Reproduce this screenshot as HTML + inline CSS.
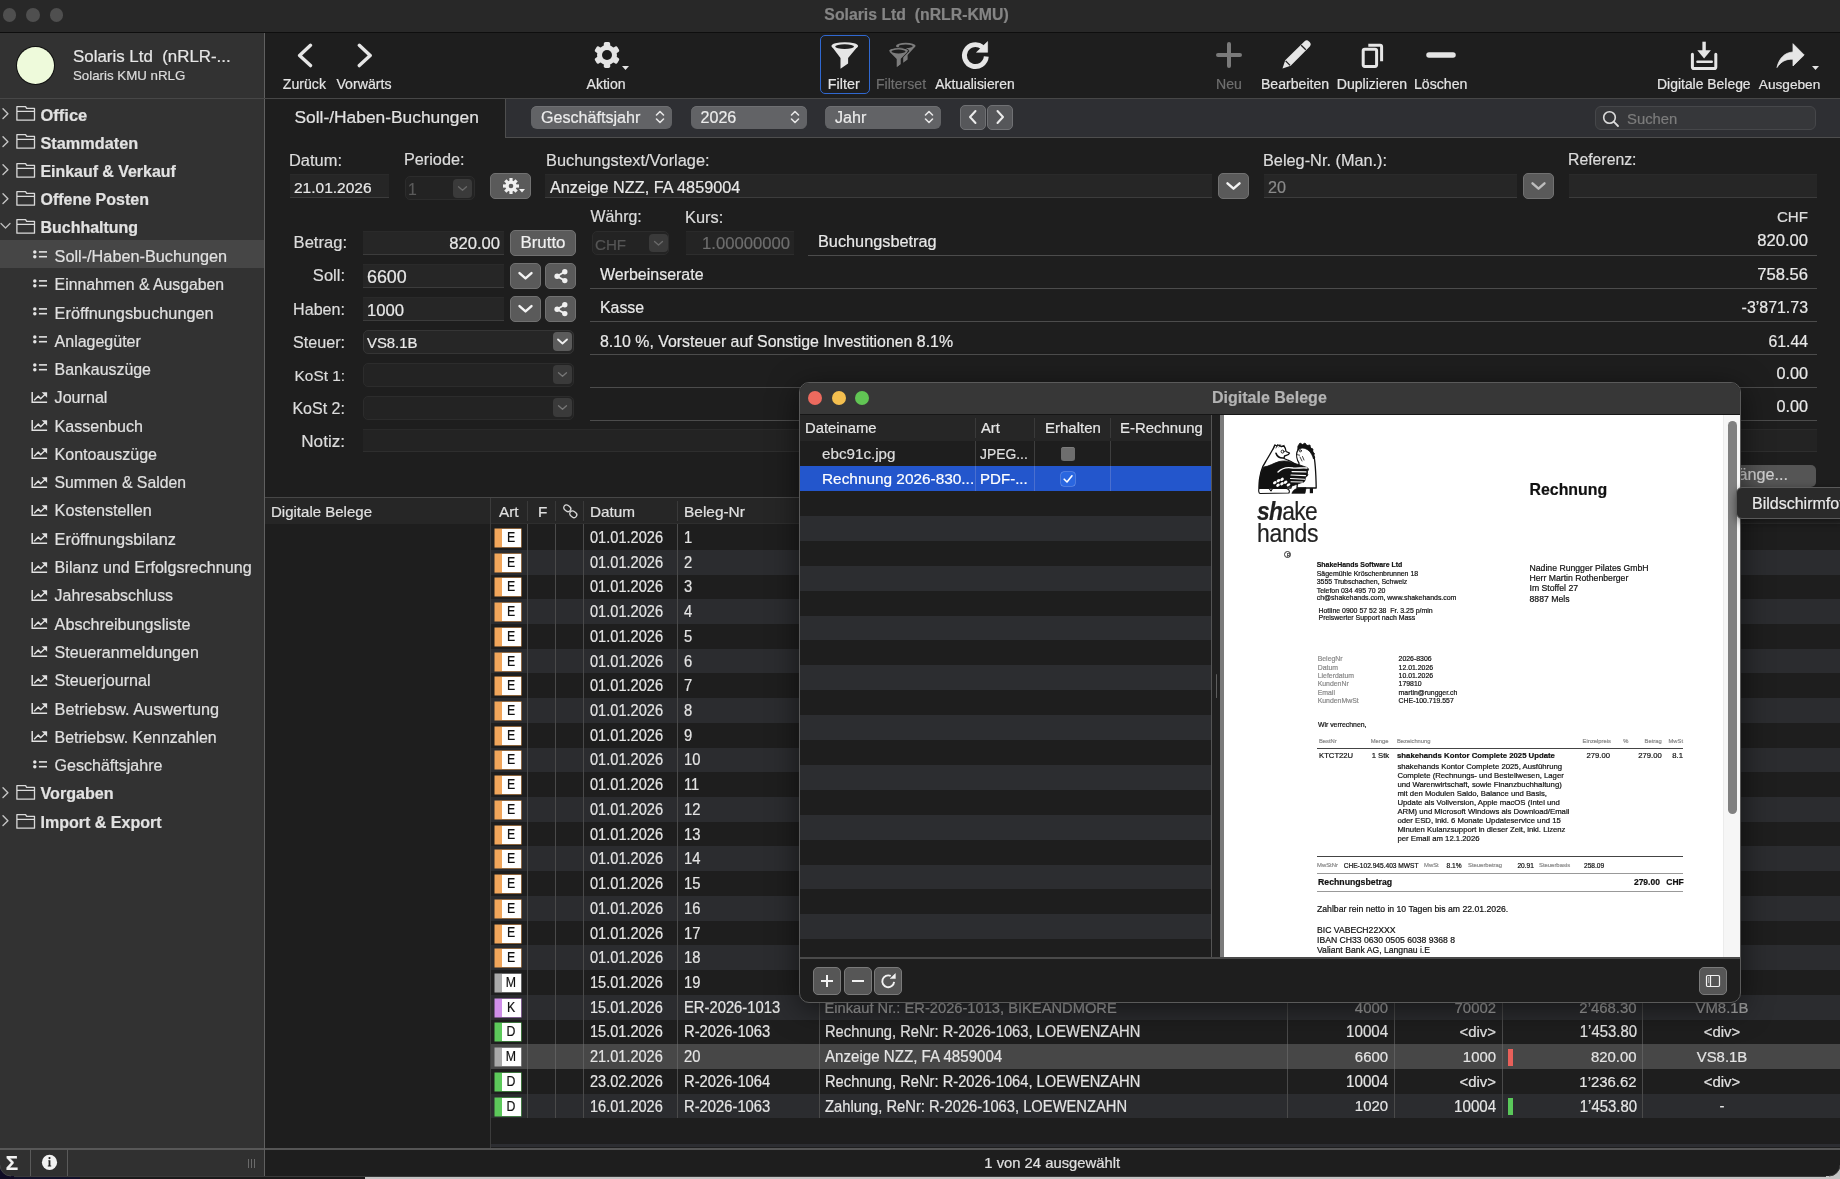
<!DOCTYPE html>
<html><head><meta charset="utf-8"><style>
html,body{margin:0;padding:0;}
body{width:1840px;height:1179px;position:relative;overflow:hidden;background:#1e1e1e;font-family:"Liberation Sans", sans-serif;}
.a{position:absolute;box-sizing:border-box;}
.t{position:absolute;white-space:nowrap;-webkit-text-stroke:0.2px currentColor;}
</style></head><body><div style="position:absolute;left:0;top:0;width:1840px;height:1179px;will-change:transform;">
<div class="a" style="left:0px;top:0px;width:1840px;height:32px;background:#282828;"></div><div class="a" style="left:0px;top:32px;width:1840px;height:1px;background:#0e0e0e;"></div><div class="a" style="left:2.5999999999999996px;top:8.3px;width:13.8px;height:13.8px;background:#4f4f4f;border-radius:50%;"></div><div class="a" style="left:26.1px;top:8.3px;width:13.8px;height:13.8px;background:#4f4f4f;border-radius:50%;"></div><div class="a" style="left:49.7px;top:8.3px;width:13.8px;height:13.8px;background:#4f4f4f;border-radius:50%;"></div><div class="t" style="top:4.73px;font-size:15.8px;line-height:19px;color:#858585;font-weight:700;left:716.5px;width:400px;text-align:center;">Solaris Ltd&nbsp; (nRLR-KMU)</div><div class="a" style="left:0px;top:33px;width:264px;height:1115px;background:#323232;"></div><div class="a" style="left:264px;top:33px;width:1px;height:1143px;background:#606060;"></div><div class="a" style="left:17px;top:47px;width:37px;height:37px;background:#eefadb;border-radius:50%;box-shadow:0 0 0 1px #111;"></div><div class="t" style="top:46.74px;font-size:16.9px;line-height:20px;color:#e6e6e6;left:73px;">Solaris Ltd&nbsp; (nRLR-...</div><div class="t" style="top:68.39px;font-size:13.3px;line-height:16px;color:#dcdcdc;left:73px;">Solaris KMU nRLG</div><div class="a" style="left:0px;top:98px;width:1840px;height:1px;background:#474747;"></div><svg class="a" style="left:1px;top:106.7px;" width="10" height="14" viewBox="0 0 10 14"><path d="M2 1.8 L6.9 6.7 L2 11.5" fill="none" stroke="#c4c4c4" stroke-width="1.4" stroke-linecap="round" stroke-linejoin="round"/></svg><svg class="a" style="left:15px;top:105.0px;" width="22" height="17" viewBox="0 0 22 17"><path d="M1.9 1.6 H10.6 L11.6 3.4 H19.5 V15.2 H1.9 Z M1.9 6.4 H19.5" fill="none" stroke="#dadada" stroke-width="1.3" stroke-linejoin="round"/></svg><div class="t" style="top:104.59px;font-size:16.49px;line-height:20px;color:#e2e2e2;font-weight:700;left:40.5px;">Office</div><svg class="a" style="left:1px;top:135.0px;" width="10" height="14" viewBox="0 0 10 14"><path d="M2 1.8 L6.9 6.7 L2 11.5" fill="none" stroke="#c4c4c4" stroke-width="1.4" stroke-linecap="round" stroke-linejoin="round"/></svg><svg class="a" style="left:15px;top:133.3px;" width="22" height="17" viewBox="0 0 22 17"><path d="M1.9 1.6 H10.6 L11.6 3.4 H19.5 V15.2 H1.9 Z M1.9 6.4 H19.5" fill="none" stroke="#dadada" stroke-width="1.3" stroke-linejoin="round"/></svg><div class="t" style="top:132.96px;font-size:16.28px;line-height:20px;color:#e2e2e2;font-weight:700;left:40.5px;">Stammdaten</div><svg class="a" style="left:1px;top:163.3px;" width="10" height="14" viewBox="0 0 10 14"><path d="M2 1.8 L6.9 6.7 L2 11.5" fill="none" stroke="#c4c4c4" stroke-width="1.4" stroke-linecap="round" stroke-linejoin="round"/></svg><svg class="a" style="left:15px;top:161.60000000000002px;" width="22" height="17" viewBox="0 0 22 17"><path d="M1.9 1.6 H10.6 L11.6 3.4 H19.5 V15.2 H1.9 Z M1.9 6.4 H19.5" fill="none" stroke="#dadada" stroke-width="1.3" stroke-linejoin="round"/></svg><div class="t" style="top:161.89px;font-size:15.91px;line-height:19px;color:#e2e2e2;font-weight:700;left:40.5px;">Einkauf &amp; Verkauf</div><svg class="a" style="left:1px;top:191.60000000000002px;" width="10" height="14" viewBox="0 0 10 14"><path d="M2 1.8 L6.9 6.7 L2 11.5" fill="none" stroke="#c4c4c4" stroke-width="1.4" stroke-linecap="round" stroke-linejoin="round"/></svg><svg class="a" style="left:15px;top:189.90000000000003px;" width="22" height="17" viewBox="0 0 22 17"><path d="M1.9 1.6 H10.6 L11.6 3.4 H19.5 V15.2 H1.9 Z M1.9 6.4 H19.5" fill="none" stroke="#dadada" stroke-width="1.3" stroke-linejoin="round"/></svg><div class="t" style="top:190.16px;font-size:16.0px;line-height:19px;color:#e2e2e2;font-weight:700;left:40.5px;">Offene Posten</div><svg class="a" style="left:0px;top:220.9px;" width="14" height="10" viewBox="0 0 14 10"><path d="M1 2.5 L5.5 7 L10 2.5" fill="none" stroke="#bdbdbd" stroke-width="1.3" stroke-linecap="round" stroke-linejoin="round"/></svg><svg class="a" style="left:15px;top:218.20000000000002px;" width="22" height="17" viewBox="0 0 22 17"><path d="M1.9 1.6 H10.6 L11.6 3.4 H19.5 V15.2 H1.9 Z M1.9 6.4 H19.5" fill="none" stroke="#dadada" stroke-width="1.3" stroke-linejoin="round"/></svg><div class="t" style="top:218.46px;font-size:15.98px;line-height:19px;color:#e2e2e2;font-weight:700;left:40.5px;">Buchhaltung</div><div class="a" style="left:0px;top:240px;width:264px;height:28px;background:#464646;"></div><svg class="a" style="left:32px;top:250.2px;" width="16" height="12" viewBox="0 0 16 12"><circle cx="2.8" cy="1.9" r="1.75" fill="#e6e6e6"/><circle cx="2.8" cy="6.7" r="1.75" fill="#e6e6e6"/><rect x="6.9" y="1.1" width="8.1" height="1.6" fill="#e0e0e0"/><rect x="6.9" y="5.9" width="8.1" height="1.6" fill="#e0e0e0"/></svg><div class="t" style="top:246.27px;font-size:16.25px;line-height:20px;color:#e0e0e0;left:54.6px;">Soll-/Haben-Buchungen</div><svg class="a" style="left:32px;top:278.5px;" width="16" height="12" viewBox="0 0 16 12"><circle cx="2.8" cy="1.9" r="1.75" fill="#e6e6e6"/><circle cx="2.8" cy="6.7" r="1.75" fill="#e6e6e6"/><rect x="6.9" y="1.1" width="8.1" height="1.6" fill="#e0e0e0"/><rect x="6.9" y="5.9" width="8.1" height="1.6" fill="#e0e0e0"/></svg><div class="t" style="top:275.22px;font-size:15.81px;line-height:19px;color:#e0e0e0;left:54.6px;">Einnahmen &amp; Ausgaben</div><svg class="a" style="left:32px;top:306.8px;" width="16" height="12" viewBox="0 0 16 12"><circle cx="2.8" cy="1.9" r="1.75" fill="#e6e6e6"/><circle cx="2.8" cy="6.7" r="1.75" fill="#e6e6e6"/><rect x="6.9" y="1.1" width="8.1" height="1.6" fill="#e0e0e0"/><rect x="6.9" y="5.9" width="8.1" height="1.6" fill="#e0e0e0"/></svg><div class="t" style="top:302.85px;font-size:16.3px;line-height:20px;color:#e0e0e0;left:54.6px;">Eröffnungsbuchungen</div><svg class="a" style="left:32px;top:335.1px;" width="16" height="12" viewBox="0 0 16 12"><circle cx="2.8" cy="1.9" r="1.75" fill="#e6e6e6"/><circle cx="2.8" cy="6.7" r="1.75" fill="#e6e6e6"/><rect x="6.9" y="1.1" width="8.1" height="1.6" fill="#e0e0e0"/><rect x="6.9" y="5.9" width="8.1" height="1.6" fill="#e0e0e0"/></svg><div class="t" style="top:331.76px;font-size:15.99px;line-height:19px;color:#e0e0e0;left:54.6px;">Anlagegüter</div><svg class="a" style="left:32px;top:363.40000000000003px;" width="16" height="12" viewBox="0 0 16 12"><circle cx="2.8" cy="1.9" r="1.75" fill="#e6e6e6"/><circle cx="2.8" cy="6.7" r="1.75" fill="#e6e6e6"/><rect x="6.9" y="1.1" width="8.1" height="1.6" fill="#e0e0e0"/><rect x="6.9" y="5.9" width="8.1" height="1.6" fill="#e0e0e0"/></svg><div class="t" style="top:360.09px;font-size:15.9px;line-height:19px;color:#e0e0e0;left:54.6px;">Bankauszüge</div><svg class="a" style="left:31px;top:390.7px;" width="17" height="14" viewBox="0 0 17 14"><path d="M1.2 0.9 V11.2 H16.1" fill="none" stroke="#e2e2e2" stroke-width="1.5"/><path d="M3.2 9.3 L7.3 5 L9.6 7.8 L14 3.4" fill="none" stroke="#e2e2e2" stroke-width="1.35" stroke-linejoin="round"/><path d="M10.6 1.2 H16.1 V6.7 Z" fill="#e2e2e2"/></svg><div class="t" style="top:388.31px;font-size:16.12px;line-height:19px;color:#e0e0e0;left:54.6px;">Journal</div><svg class="a" style="left:31px;top:419.0px;" width="17" height="14" viewBox="0 0 17 14"><path d="M1.2 0.9 V11.2 H16.1" fill="none" stroke="#e2e2e2" stroke-width="1.5"/><path d="M3.2 9.3 L7.3 5 L9.6 7.8 L14 3.4" fill="none" stroke="#e2e2e2" stroke-width="1.35" stroke-linejoin="round"/><path d="M10.6 1.2 H16.1 V6.7 Z" fill="#e2e2e2"/></svg><div class="t" style="top:416.64px;font-size:16.04px;line-height:19px;color:#e0e0e0;left:54.6px;">Kassenbuch</div><svg class="a" style="left:31px;top:447.3px;" width="17" height="14" viewBox="0 0 17 14"><path d="M1.2 0.9 V11.2 H16.1" fill="none" stroke="#e2e2e2" stroke-width="1.5"/><path d="M3.2 9.3 L7.3 5 L9.6 7.8 L14 3.4" fill="none" stroke="#e2e2e2" stroke-width="1.35" stroke-linejoin="round"/><path d="M10.6 1.2 H16.1 V6.7 Z" fill="#e2e2e2"/></svg><div class="t" style="top:444.95px;font-size:16.03px;line-height:19px;color:#e0e0e0;left:54.6px;">Kontoauszüge</div><svg class="a" style="left:31px;top:475.6px;" width="17" height="14" viewBox="0 0 17 14"><path d="M1.2 0.9 V11.2 H16.1" fill="none" stroke="#e2e2e2" stroke-width="1.5"/><path d="M3.2 9.3 L7.3 5 L9.6 7.8 L14 3.4" fill="none" stroke="#e2e2e2" stroke-width="1.35" stroke-linejoin="round"/><path d="M10.6 1.2 H16.1 V6.7 Z" fill="#e2e2e2"/></svg><div class="t" style="top:473.34px;font-size:15.75px;line-height:19px;color:#e0e0e0;left:54.6px;">Summen &amp; Salden</div><svg class="a" style="left:31px;top:503.9px;" width="17" height="14" viewBox="0 0 17 14"><path d="M1.2 0.9 V11.2 H16.1" fill="none" stroke="#e2e2e2" stroke-width="1.5"/><path d="M3.2 9.3 L7.3 5 L9.6 7.8 L14 3.4" fill="none" stroke="#e2e2e2" stroke-width="1.35" stroke-linejoin="round"/><path d="M10.6 1.2 H16.1 V6.7 Z" fill="#e2e2e2"/></svg><div class="t" style="top:501.48px;font-size:16.21px;line-height:19px;color:#e0e0e0;left:54.6px;">Kostenstellen</div><svg class="a" style="left:31px;top:532.2px;" width="17" height="14" viewBox="0 0 17 14"><path d="M1.2 0.9 V11.2 H16.1" fill="none" stroke="#e2e2e2" stroke-width="1.5"/><path d="M3.2 9.3 L7.3 5 L9.6 7.8 L14 3.4" fill="none" stroke="#e2e2e2" stroke-width="1.35" stroke-linejoin="round"/><path d="M10.6 1.2 H16.1 V6.7 Z" fill="#e2e2e2"/></svg><div class="t" style="top:529.24px;font-size:16.34px;line-height:20px;color:#e0e0e0;left:54.6px;">Eröffnungsbilanz</div><svg class="a" style="left:31px;top:560.5px;" width="17" height="14" viewBox="0 0 17 14"><path d="M1.2 0.9 V11.2 H16.1" fill="none" stroke="#e2e2e2" stroke-width="1.5"/><path d="M3.2 9.3 L7.3 5 L9.6 7.8 L14 3.4" fill="none" stroke="#e2e2e2" stroke-width="1.35" stroke-linejoin="round"/><path d="M10.6 1.2 H16.1 V6.7 Z" fill="#e2e2e2"/></svg><div class="t" style="top:558.11px;font-size:16.13px;line-height:19px;color:#e0e0e0;left:54.6px;">Bilanz und Erfolgsrechnung</div><svg class="a" style="left:31px;top:588.8000000000001px;" width="17" height="14" viewBox="0 0 17 14"><path d="M1.2 0.9 V11.2 H16.1" fill="none" stroke="#e2e2e2" stroke-width="1.5"/><path d="M3.2 9.3 L7.3 5 L9.6 7.8 L14 3.4" fill="none" stroke="#e2e2e2" stroke-width="1.35" stroke-linejoin="round"/><path d="M10.6 1.2 H16.1 V6.7 Z" fill="#e2e2e2"/></svg><div class="t" style="top:586.49px;font-size:15.91px;line-height:19px;color:#e0e0e0;left:54.6px;">Jahresabschluss</div><svg class="a" style="left:31px;top:617.1px;" width="17" height="14" viewBox="0 0 17 14"><path d="M1.2 0.9 V11.2 H16.1" fill="none" stroke="#e2e2e2" stroke-width="1.5"/><path d="M3.2 9.3 L7.3 5 L9.6 7.8 L14 3.4" fill="none" stroke="#e2e2e2" stroke-width="1.35" stroke-linejoin="round"/><path d="M10.6 1.2 H16.1 V6.7 Z" fill="#e2e2e2"/></svg><div class="t" style="top:614.68px;font-size:16.22px;line-height:19px;color:#e0e0e0;left:54.6px;">Abschreibungsliste</div><svg class="a" style="left:31px;top:645.4000000000001px;" width="17" height="14" viewBox="0 0 17 14"><path d="M1.2 0.9 V11.2 H16.1" fill="none" stroke="#e2e2e2" stroke-width="1.5"/><path d="M3.2 9.3 L7.3 5 L9.6 7.8 L14 3.4" fill="none" stroke="#e2e2e2" stroke-width="1.35" stroke-linejoin="round"/><path d="M10.6 1.2 H16.1 V6.7 Z" fill="#e2e2e2"/></svg><div class="t" style="top:643.05px;font-size:16.03px;line-height:19px;color:#e0e0e0;left:54.6px;">Steueranmeldungen</div><svg class="a" style="left:31px;top:673.7px;" width="17" height="14" viewBox="0 0 17 14"><path d="M1.2 0.9 V11.2 H16.1" fill="none" stroke="#e2e2e2" stroke-width="1.5"/><path d="M3.2 9.3 L7.3 5 L9.6 7.8 L14 3.4" fill="none" stroke="#e2e2e2" stroke-width="1.35" stroke-linejoin="round"/><path d="M10.6 1.2 H16.1 V6.7 Z" fill="#e2e2e2"/></svg><div class="t" style="top:671.30px;font-size:16.15px;line-height:19px;color:#e0e0e0;left:54.6px;">Steuerjournal</div><svg class="a" style="left:31px;top:702.0000000000001px;" width="17" height="14" viewBox="0 0 17 14"><path d="M1.2 0.9 V11.2 H16.1" fill="none" stroke="#e2e2e2" stroke-width="1.5"/><path d="M3.2 9.3 L7.3 5 L9.6 7.8 L14 3.4" fill="none" stroke="#e2e2e2" stroke-width="1.35" stroke-linejoin="round"/><path d="M10.6 1.2 H16.1 V6.7 Z" fill="#e2e2e2"/></svg><div class="t" style="top:699.06px;font-size:16.28px;line-height:20px;color:#e0e0e0;left:54.6px;">Betriebsw. Auswertung</div><svg class="a" style="left:31px;top:730.3000000000001px;" width="17" height="14" viewBox="0 0 17 14"><path d="M1.2 0.9 V11.2 H16.1" fill="none" stroke="#e2e2e2" stroke-width="1.5"/><path d="M3.2 9.3 L7.3 5 L9.6 7.8 L14 3.4" fill="none" stroke="#e2e2e2" stroke-width="1.35" stroke-linejoin="round"/><path d="M10.6 1.2 H16.1 V6.7 Z" fill="#e2e2e2"/></svg><div class="t" style="top:727.98px;font-size:15.94px;line-height:19px;color:#e0e0e0;left:54.6px;">Betriebsw. Kennzahlen</div><svg class="a" style="left:32px;top:759.6px;" width="16" height="12" viewBox="0 0 16 12"><circle cx="2.8" cy="1.9" r="1.75" fill="#e6e6e6"/><circle cx="2.8" cy="6.7" r="1.75" fill="#e6e6e6"/><rect x="6.9" y="1.1" width="8.1" height="1.6" fill="#e0e0e0"/><rect x="6.9" y="5.9" width="8.1" height="1.6" fill="#e0e0e0"/></svg><div class="t" style="top:756.24px;font-size:16.05px;line-height:19px;color:#e0e0e0;left:54.6px;">Geschäftsjahre</div><svg class="a" style="left:1px;top:785.9000000000001px;" width="10" height="14" viewBox="0 0 10 14"><path d="M2 1.8 L6.9 6.7 L2 11.5" fill="none" stroke="#c4c4c4" stroke-width="1.4" stroke-linecap="round" stroke-linejoin="round"/></svg><svg class="a" style="left:15px;top:784.2px;" width="22" height="17" viewBox="0 0 22 17"><path d="M1.9 1.6 H10.6 L11.6 3.4 H19.5 V15.2 H1.9 Z M1.9 6.4 H19.5" fill="none" stroke="#dadada" stroke-width="1.3" stroke-linejoin="round"/></svg><div class="t" style="top:784.42px;font-size:16.11px;line-height:19px;color:#e2e2e2;font-weight:700;left:40.5px;">Vorgaben</div><svg class="a" style="left:1px;top:814.2px;" width="10" height="14" viewBox="0 0 10 14"><path d="M2 1.8 L6.9 6.7 L2 11.5" fill="none" stroke="#c4c4c4" stroke-width="1.4" stroke-linecap="round" stroke-linejoin="round"/></svg><svg class="a" style="left:15px;top:812.5px;" width="22" height="17" viewBox="0 0 22 17"><path d="M1.9 1.6 H10.6 L11.6 3.4 H19.5 V15.2 H1.9 Z M1.9 6.4 H19.5" fill="none" stroke="#dadada" stroke-width="1.3" stroke-linejoin="round"/></svg><div class="t" style="top:812.74px;font-size:16.05px;line-height:19px;color:#e2e2e2;font-weight:700;left:40.5px;">Import &amp; Export</div><div class="a" style="left:0px;top:1148px;width:264px;height:2px;background:#585858;"></div><div class="a" style="left:0px;top:1150px;width:264px;height:26px;background:#303030;"></div><div class="a" style="left:29.5px;top:1149px;width:1.2px;height:27px;background:#5a5a5a;"></div><div class="a" style="left:67px;top:1149px;width:1.2px;height:27px;background:#5a5a5a;"></div><div class="a" style="left:0px;top:1175.5px;width:264px;height:1px;background:#444;"></div><div class="t" style="top:1150.40px;font-size:20.5px;line-height:25px;color:#f2f2f2;font-weight:700;left:-3.1999999999999993px;width:30px;text-align:center;">Σ</div><svg class="a" style="left:41px;top:1154px;" width="17" height="17" viewBox="0 0 17 17"><circle cx="8.5" cy="8.4" r="7.6" fill="#f2f2f2"/><circle cx="8.5" cy="4.1" r="1.1" fill="#222"/><path d="M7.3 6.3 H9.4 V11.6 H10.2 V12.5 H6.8 V11.6 H7.6 V7.2 H7.3 Z" fill="#222"/></svg><div class="a" style="left:248px;top:1159px;width:1.2px;height:9px;background:#6a6a6a;"></div><div class="a" style="left:251px;top:1159px;width:1.2px;height:9px;background:#6a6a6a;"></div><div class="a" style="left:254px;top:1159px;width:1.2px;height:9px;background:#6a6a6a;"></div><svg class="a" style="left:295px;top:43px;" width="20" height="26" viewBox="0 0 20 26"><path d="M15.5 2.3 L4.6 12.5 L15.5 22.6" fill="none" stroke="#e6e6e6" stroke-width="3.4" stroke-linecap="round" stroke-linejoin="round"/></svg><svg class="a" style="left:354px;top:43px;" width="20" height="26" viewBox="0 0 20 26"><path d="M5.3 2.3 L16.2 12.5 L5.3 22.6" fill="none" stroke="#e6e6e6" stroke-width="3.4" stroke-linecap="round" stroke-linejoin="round"/></svg><div class="t" style="top:76.10px;font-size:14.13px;line-height:17px;color:#e4e4e4;left:224.39999999999998px;width:160px;text-align:center;">Zurück</div><div class="t" style="top:76.09px;font-size:14.17px;line-height:17px;color:#e4e4e4;left:284.0px;width:160px;text-align:center;">Vorwärts</div><svg class="a" style="left:593.6px;top:42px;" width="26" height="27" viewBox="0 0 26 27"><g transform="translate(13,13)"><rect x="-3.2" y="-13" width="6.4" height="6" rx="1.7" transform="rotate(0)" fill="#e4e4e4"/><rect x="-3.2" y="-13" width="6.4" height="6" rx="1.7" transform="rotate(60)" fill="#e4e4e4"/><rect x="-3.2" y="-13" width="6.4" height="6" rx="1.7" transform="rotate(120)" fill="#e4e4e4"/><rect x="-3.2" y="-13" width="6.4" height="6" rx="1.7" transform="rotate(180)" fill="#e4e4e4"/><rect x="-3.2" y="-13" width="6.4" height="6" rx="1.7" transform="rotate(240)" fill="#e4e4e4"/><rect x="-3.2" y="-13" width="6.4" height="6" rx="1.7" transform="rotate(300)" fill="#e4e4e4"/><circle r="10" fill="#e4e4e4"/><circle r="5" fill="#1e1e1e"/></g></svg><svg class="a" style="left:622px;top:66px;" width="8" height="5" viewBox="0 0 8 5"><path d="M0 0 H7 L3.5 4 z" fill="#e4e4e4"/></svg><div class="t" style="top:76.11px;font-size:14.1px;line-height:17px;color:#e4e4e4;left:526.1px;width:160px;text-align:center;">Aktion</div><div class="a" style="left:820px;top:35.3px;width:49.5px;height:58.7px;border:1.6px solid #3068d0;border-radius:5px;"></div><svg class="a" style="left:831px;top:41px;" width="28" height="30" viewBox="0 0 28 30"><ellipse cx="13.75" cy="4.9" rx="13.3" ry="3.7" fill="#e6e6e6"/><path d="M0.8 5.6 L9.5 17 V27.8 L17.1 22.4 V17 L26.7 5.6 Z" fill="#e6e6e6"/><ellipse cx="13.6" cy="5.6" rx="9.4" ry="2.3" fill="#1e1e1e"/></svg><div class="t" style="top:76.04px;font-size:14.32px;line-height:17px;color:#e4e4e4;left:763.75px;width:160px;text-align:center;">Filter</div><svg class="a" style="left:886px;top:40px;" width="32" height="30" viewBox="0 0 32 30"><g fill="#7c7c7c"><ellipse cx="19.8" cy="5.75" rx="9.8" ry="2.95"/><path d="M10.2 6.3 L17.2 15 V22.7 L21.6 19.5 V15 L29.5 6.3 Z"/><ellipse cx="19.7" cy="6.3" rx="7" ry="1.8" fill="#1e1e1e"/><g stroke="#1e1e1e" stroke-width="1.1"><ellipse cx="12.6" cy="10.85" rx="9.8" ry="3.15"/><path d="M2.9 11.4 L10.3 18.8 V28 L15 24.5 V18.8 L22.3 11.4 Z"/></g><ellipse cx="12.6" cy="10.85" rx="9.3" ry="2.7"/><path d="M3.3 11.6 L10.8 19 V27 L14.5 24.2 V19 L21.9 11.6 Z"/><ellipse cx="12.5" cy="11.5" rx="7" ry="1.9" fill="#1e1e1e"/></g></svg><div class="t" style="top:76.11px;font-size:14.1px;line-height:17px;color:#6f6f6f;left:821.0px;width:160px;text-align:center;">Filterset</div><svg class="a" style="left:958px;top:38px;" width="34" height="34" viewBox="0 0 34 34"><path d="M24.44 9.21 A10.95 10.95 0 1 0 28.3 18.55" fill="none" stroke="#e6e6e6" stroke-width="4.9"/><path d="M18.5 14.3 L29.6 14.3 L29.6 3.6 Z" fill="#e6e6e6" stroke="#e6e6e6" stroke-width="0.6" stroke-linejoin="round"/></svg><div class="t" style="top:76.20px;font-size:13.85px;line-height:17px;color:#e4e4e4;left:895.0px;width:160px;text-align:center;">Aktualisieren</div><svg class="a" style="left:1215px;top:41px;" width="28" height="28" viewBox="0 0 28 28"><path d="M14 3 V25 M3 14 H25" stroke="#7a7a7a" stroke-width="4" stroke-linecap="round"/></svg><div class="t" style="top:76.11px;font-size:14.1px;line-height:17px;color:#6f6f6f;left:1149.0px;width:160px;text-align:center;">Neu</div><svg class="a" style="left:1281px;top:40px;" width="30" height="30" viewBox="0 0 30 30"><path d="M1.5 28.5 L4.2 20.3 L23.6 1.2 Q25.8 -0.8 28 1.4 L28.6 2 Q30.8 4.2 28.8 6.4 L9.7 25.8 Z" fill="#e6e6e6"/><path d="M4.6 20.9 L9.1 25.4 M20.2 5.2 L24.8 9.8" stroke="#1e1e1e" stroke-width="1.3"/></svg><div class="t" style="top:76.12px;font-size:14.09px;line-height:17px;color:#e4e4e4;left:1215.05px;width:160px;text-align:center;">Bearbeiten</div><svg class="a" style="left:1359px;top:41px;" width="26" height="28" viewBox="0 0 26 28"><rect x="4.2" y="8.2" width="13.4" height="17.2" rx="1.6" fill="none" stroke="#e6e6e6" stroke-width="3"/><path d="M9.3 4.3 H21.1 Q22.6 4.3 22.6 5.8 V20.3" fill="none" stroke="#e6e6e6" stroke-width="3"/></svg><div class="t" style="top:76.12px;font-size:14.09px;line-height:17px;color:#e4e4e4;left:1291.95px;width:160px;text-align:center;">Duplizieren</div><svg class="a" style="left:1426px;top:50px;" width="30" height="10" viewBox="0 0 30 10"><path d="M3 5 H27" stroke="#e4e4e4" stroke-width="5.5" stroke-linecap="round"/></svg><div class="t" style="top:76.10px;font-size:14.13px;line-height:17px;color:#e4e4e4;left:1360.65px;width:160px;text-align:center;">Löschen</div><svg class="a" style="left:1689px;top:41px;" width="30" height="30" viewBox="0 0 30 30"><path d="M15.1 0.7 V11" stroke="#e6e6e6" stroke-width="3.4"/><path d="M8.3 9.2 H21.9 L15.1 17.4 Z" fill="#e6e6e6"/><path d="M3.4 13.2 V26 Q3.4 27.6 5 27.6 H25.2 Q26.8 27.6 26.8 26 V13.2" fill="none" stroke="#e6e6e6" stroke-width="3" stroke-linecap="round" stroke-linejoin="round"/><path d="M8.4 20.8 H22.8" stroke="#e6e6e6" stroke-width="2.4" stroke-linecap="round"/></svg><div class="t" style="top:76.18px;font-size:13.92px;line-height:17px;color:#e4e4e4;left:1623.85px;width:160px;text-align:center;">Digitale Belege</div><svg class="a" style="left:1775px;top:42px;" width="32" height="28" viewBox="0 0 32 28"><path d="M2 25.5 C4 16 10 10.5 18 10 V1.7 L29.2 13 L18 24 V17.2 C11 16.8 6 19.5 2 25.5 Z" fill="#e6e6e6" stroke="#e6e6e6" stroke-width="0.8" stroke-linejoin="round"/></svg><svg class="a" style="left:1812px;top:66px;" width="8" height="5" viewBox="0 0 8 5"><path d="M0 0 H7 L3.5 4 z" fill="#e4e4e4"/></svg><div class="t" style="top:76.76px;font-size:13.67px;line-height:16px;color:#e4e4e4;left:1709.5500000000002px;width:160px;text-align:center;">Ausgeben</div><div class="a" style="left:265px;top:99px;width:240px;height:38px;background:#1e1e1e;"></div><div class="t" style="top:107.28px;font-size:17.38px;line-height:21px;color:#e2e2e2;left:294.5px;">Soll-/Haben-Buchungen</div><div class="a" style="left:505px;top:99px;width:1335px;height:38px;background:#2e2f33;"></div><div class="a" style="left:505px;top:99px;width:1px;height:39px;background:#4e4e4e;"></div><div class="a" style="left:505px;top:137px;width:1335px;height:1px;background:#4e4e4e;"></div><div class="a" style="left:531px;top:106px;width:141.0px;height:22.5px;background:#626366;border-radius:6px;box-shadow:inset 0 0.8px 0 #737477;"></div><div class="t" style="top:107.61px;font-size:16.12px;line-height:19px;color:#ececec;left:541px;">Geschäftsjahr</div><svg class="a" style="left:653.3px;top:108px;" width="14" height="18" viewBox="0 0 14 18"><path d="M3.5 7 L7 3.5 L10.5 7 M3.5 11 L7 14.5 L10.5 11" fill="none" stroke="#e6e6e6" stroke-width="1.6" stroke-linecap="round" stroke-linejoin="round"/></svg><div class="a" style="left:690.5px;top:106px;width:116.0px;height:22.5px;background:#626366;border-radius:6px;box-shadow:inset 0 0.8px 0 #737477;"></div><div class="t" style="top:107.62px;font-size:16.1px;line-height:19px;color:#ececec;left:700.5px;">2026</div><svg class="a" style="left:787.8px;top:108px;" width="14" height="18" viewBox="0 0 14 18"><path d="M3.5 7 L7 3.5 L10.5 7 M3.5 11 L7 14.5 L10.5 11" fill="none" stroke="#e6e6e6" stroke-width="1.6" stroke-linecap="round" stroke-linejoin="round"/></svg><div class="a" style="left:825px;top:106px;width:115.5px;height:22.5px;background:#626366;border-radius:6px;box-shadow:inset 0 0.8px 0 #737477;"></div><div class="t" style="top:107.62px;font-size:16.1px;line-height:19px;color:#ececec;left:835px;">Jahr</div><svg class="a" style="left:921.8px;top:108px;" width="14" height="18" viewBox="0 0 14 18"><path d="M3.5 7 L7 3.5 L10.5 7 M3.5 11 L7 14.5 L10.5 11" fill="none" stroke="#e6e6e6" stroke-width="1.6" stroke-linecap="round" stroke-linejoin="round"/></svg><div class="a" style="left:960px;top:105px;width:26px;height:24.5px;background:#56575a;border-radius:5px;border:1px solid #707174;"></div><svg class="a" style="left:960px;top:105px;" width="26" height="24" viewBox="0 0 26 24"><path d="M15.5 6 L10 12 L15.5 18" fill="none" stroke="#ececec" stroke-width="2" stroke-linecap="round" stroke-linejoin="round"/></svg><div class="a" style="left:987px;top:105px;width:26px;height:24.5px;background:#56575a;border-radius:5px;border:1px solid #707174;"></div><svg class="a" style="left:987px;top:105px;" width="26" height="24" viewBox="0 0 26 24"><path d="M10.5 6 L16 12 L10.5 18" fill="none" stroke="#ececec" stroke-width="2" stroke-linecap="round" stroke-linejoin="round"/></svg><div class="a" style="left:1595px;top:106px;width:221px;height:23.5px;background:#36373a;border-radius:6px;border:1px solid #46474a;"></div><svg class="a" style="left:1601px;top:109px;" width="20" height="20" viewBox="0 0 20 20"><circle cx="8.5" cy="8.5" r="5.8" fill="none" stroke="#dcdcdc" stroke-width="1.6"/><path d="M12.7 12.7 L17 17" stroke="#dcdcdc" stroke-width="1.8" stroke-linecap="round"/></svg><div class="t" style="top:109.75px;font-size:14.85px;line-height:18px;color:#7c7c7c;left:1627px;">Suchen</div><div class="t" style="top:149.50px;font-size:16.44px;line-height:20px;color:#dcdcdc;left:289px;">Datum:</div><div class="t" style="top:150.07px;font-size:16.24px;line-height:19px;color:#dcdcdc;left:404px;">Periode:</div><div class="t" style="top:149.53px;font-size:16.35px;line-height:20px;color:#dcdcdc;left:546px;">Buchungstext/Vorlage:</div><div class="t" style="top:149.55px;font-size:16.31px;line-height:20px;color:#dcdcdc;left:1263px;">Beleg-Nr. (Man.):</div><div class="t" style="top:150.23px;font-size:15.8px;line-height:19px;color:#dcdcdc;left:1568px;">Referenz:</div><div class="a" style="left:290px;top:174px;width:99px;height:24px;background:#262626;border-bottom:1px solid #3c3c3c;border-top:1px solid #2a2a2a;"></div><div class="t" style="top:178.13px;font-size:15.5px;line-height:19px;color:#e8e8e8;left:294px;">21.01.2026</div><div class="a" style="left:405px;top:176px;width:70px;height:24px;background:#232323;border-radius:5px;border:1px solid #2c2c2c;"></div><div class="a" style="left:453px;top:178.5px;width:19px;height:19px;background:#3a3a3a;border-radius:4px;"></div><svg class="a" style="left:453px;top:178.5px;" width="19" height="19" viewBox="0 0 19 19"><path d="M5.5 7.7 L9.5 11.3 L13.5 7.7" fill="none" stroke="#6a6a6a" stroke-width="1.3" stroke-linecap="round" stroke-linejoin="round"/></svg><div class="t" style="top:180.03px;font-size:15.8px;line-height:19px;color:#5a5a5a;left:408px;">1</div><div class="a" style="left:490px;top:173px;width:41px;height:26px;background:#5a5a5a;border-radius:5px;border:1px solid #717171;"></div><svg class="a" style="left:502px;top:177px;" width="18" height="18" viewBox="0 0 18 18"><g transform="translate(9,9)"><rect x="-1.6" y="-8" width="3.2" height="4" transform="rotate(0)" fill="#f0f0f0"/><rect x="-1.6" y="-8" width="3.2" height="4" transform="rotate(45)" fill="#f0f0f0"/><rect x="-1.6" y="-8" width="3.2" height="4" transform="rotate(90)" fill="#f0f0f0"/><rect x="-1.6" y="-8" width="3.2" height="4" transform="rotate(135)" fill="#f0f0f0"/><rect x="-1.6" y="-8" width="3.2" height="4" transform="rotate(180)" fill="#f0f0f0"/><rect x="-1.6" y="-8" width="3.2" height="4" transform="rotate(225)" fill="#f0f0f0"/><rect x="-1.6" y="-8" width="3.2" height="4" transform="rotate(270)" fill="#f0f0f0"/><rect x="-1.6" y="-8" width="3.2" height="4" transform="rotate(315)" fill="#f0f0f0"/><circle r="5.6" fill="#f0f0f0"/><circle r="2.3" fill="#5a5a5a"/></g></svg><svg class="a" style="left:519px;top:189px;" width="7" height="4" viewBox="0 0 7 4"><path d="M0 0 H6 L3 3.5 z" fill="#f0f0f0"/></svg><div class="a" style="left:545px;top:174px;width:667px;height:24px;background:#262626;border-bottom:1px solid #3c3c3c;border-top:1px solid #2a2a2a;"></div><div class="t" style="top:177.88px;font-size:16.23px;line-height:19px;color:#e8e8e8;left:550px;">Anzeige NZZ, FA 4859004</div><div class="a" style="left:1218px;top:173px;width:31px;height:26px;background:#5a5a5a;border-radius:5px;border:1px solid #717171;"></div><svg class="a" style="left:1218px;top:173px;" width="31" height="26" viewBox="0 0 31 26"><path d="M9.5 10.3 L15.5 15.7 L21.5 10.3" fill="none" stroke="#f4f4f4" stroke-width="2.4" stroke-linecap="round" stroke-linejoin="round"/></svg><div class="a" style="left:1264px;top:174px;width:253px;height:24px;background:#262626;border-bottom:1px solid #3c3c3c;border-top:1px solid #2a2a2a;"></div><div class="t" style="top:177.89px;font-size:16.2px;line-height:19px;color:#8a8a8a;left:1268px;">20</div><div class="a" style="left:1523px;top:173px;width:31px;height:26px;background:#5a5a5a;border-radius:5px;border:1px solid #717171;"></div><svg class="a" style="left:1523px;top:173px;" width="31" height="26" viewBox="0 0 31 26"><path d="M9.5 10.3 L15.5 15.7 L21.5 10.3" fill="none" stroke="#bdbdbd" stroke-width="2.4" stroke-linecap="round" stroke-linejoin="round"/></svg><div class="a" style="left:1569px;top:174px;width:248px;height:24px;background:#262626;border-bottom:1px solid #3c3c3c;border-top:1px solid #2a2a2a;"></div><div class="t" style="top:207.49px;font-size:15.89px;line-height:19px;color:#dcdcdc;left:590.5px;">Währg:</div><div class="t" style="top:206.83px;font-size:16.36px;line-height:20px;color:#dcdcdc;left:685px;">Kurs:</div><div class="t" style="top:208.25px;font-size:15.15px;line-height:18px;color:#dcdcdc;right:32px;text-align:right;">CHF</div><div class="t" style="top:233.26px;font-size:16.57px;line-height:20px;color:#dcdcdc;right:1493px;text-align:right;">Betrag:</div><div class="a" style="left:363px;top:231px;width:141px;height:24px;background:#262626;border-bottom:1px solid #3c3c3c;border-top:1px solid #2a2a2a;"></div><div class="t" style="top:233.73px;font-size:16.64px;line-height:20px;color:#e8e8e8;right:1340px;text-align:right;">820.00</div><div class="a" style="left:510px;top:230px;width:66px;height:25.5px;background:#5a5a5a;border-radius:5px;border:1px solid #717171;"></div><div class="t" style="top:232.64px;font-size:16.9px;line-height:20px;color:#f0f0f0;left:503.0px;width:80px;text-align:center;">Brutto</div><div class="a" style="left:592px;top:231px;width:77px;height:24px;background:#232323;border-radius:5px;border:1px solid #2c2c2c;"></div><div class="a" style="left:649px;top:233.5px;width:19px;height:18.5px;background:#3a3a3a;border-radius:4px;"></div><svg class="a" style="left:649px;top:233.5px;" width="19" height="18.5" viewBox="0 0 19 18.5"><path d="M5.5 7.45 L9.5 11.05 L13.5 7.45" fill="none" stroke="#6a6a6a" stroke-width="1.3" stroke-linecap="round" stroke-linejoin="round"/></svg><div class="t" style="top:235.75px;font-size:15.15px;line-height:18px;color:#555555;left:595px;">CHF</div><div class="a" style="left:686px;top:231px;width:108px;height:24px;background:#242424;border-bottom:1px solid #2e2e2e;border-top:1px solid #2a2a2a;"></div><div class="t" style="top:234.22px;font-size:16.67px;line-height:20px;color:#6e6e6e;right:1050px;text-align:right;">1.00000000</div><div class="t" style="top:231.35px;font-size:16.3px;line-height:20px;color:#e8e8e8;left:818px;">Buchungsbetrag</div><div class="t" style="top:231.23px;font-size:16.64px;line-height:20px;color:#e8e8e8;right:32px;text-align:right;">820.00</div><div class="a" style="left:808px;top:254.5px;width:1009px;height:1.5px;background:#4c4c4c;"></div><div class="t" style="top:265.46px;font-size:15.98px;line-height:19px;color:#e8e8e8;left:600px;">Werbeinserate</div><div class="t" style="top:264.74px;font-size:16.62px;line-height:20px;color:#e8e8e8;right:32px;text-align:right;">758.56</div><div class="a" style="left:590px;top:287.5px;width:1227px;height:1.5px;background:#4c4c4c;"></div><div class="t" style="top:298.49px;font-size:15.89px;line-height:19px;color:#e8e8e8;left:600px;">Kasse</div><div class="t" style="top:298.48px;font-size:15.93px;line-height:19px;color:#e8e8e8;right:32px;text-align:right;">-3’871.73</div><div class="a" style="left:590px;top:320.5px;width:1227px;height:1.5px;background:#4c4c4c;"></div><div class="t" style="top:331.50px;font-size:15.88px;line-height:19px;color:#e8e8e8;left:600px;">8.10 %, Vorsteuer auf Sonstige Investitionen 8.1%</div><div class="t" style="top:331.53px;font-size:15.8px;line-height:19px;color:#e8e8e8;right:32px;text-align:right;">61.44</div><div class="a" style="left:590px;top:353.5px;width:1227px;height:1.5px;background:#4c4c4c;"></div><div class="t" style="top:364.39px;font-size:16.2px;line-height:19px;color:#e8e8e8;right:32px;text-align:right;">0.00</div><div class="a" style="left:590px;top:386.5px;width:1227px;height:1.5px;background:#4c4c4c;"></div><div class="t" style="top:397.39px;font-size:16.2px;line-height:19px;color:#e8e8e8;right:32px;text-align:right;">0.00</div><div class="a" style="left:590px;top:419.5px;width:1227px;height:1.5px;background:#4c4c4c;"></div><div class="t" style="top:266.28px;font-size:16.52px;line-height:20px;color:#dcdcdc;right:1495px;text-align:right;">Soll:</div><div class="a" style="left:363px;top:264px;width:141px;height:24px;background:#262626;border-bottom:1px solid #3c3c3c;border-top:1px solid #2a2a2a;"></div><div class="t" style="top:266.61px;font-size:17.85px;line-height:21px;color:#e8e8e8;left:367px;">6600</div><div class="t" style="top:299.92px;font-size:16.11px;line-height:19px;color:#dcdcdc;right:1495px;text-align:right;">Haben:</div><div class="a" style="left:363px;top:297px;width:141px;height:24px;background:#262626;border-bottom:1px solid #3c3c3c;border-top:1px solid #2a2a2a;"></div><div class="t" style="top:300.52px;font-size:16.68px;line-height:20px;color:#e8e8e8;left:367px;">1000</div><div class="a" style="left:510px;top:263px;width:31px;height:25.5px;background:#5a5a5a;border-radius:5px;border:1px solid #717171;"></div><svg class="a" style="left:510px;top:263px;" width="31" height="25.5" viewBox="0 0 31 25.5"><path d="M9.5 10.05 L15.5 15.45 L21.5 10.05" fill="none" stroke="#f4f4f4" stroke-width="2.4" stroke-linecap="round" stroke-linejoin="round"/></svg><div class="a" style="left:545px;top:263px;width:31px;height:25.5px;background:#5a5a5a;border-radius:5px;border:1px solid #717171;"></div><svg class="a" style="left:547.5px;top:263.5px;" width="26" height="25" viewBox="0 0 26 25"><circle cx="16.8" cy="7.8" r="2.7" fill="#f0f0f0"/><circle cx="9.1" cy="12.3" r="2.7" fill="#f0f0f0"/><circle cx="16.8" cy="16.6" r="2.7" fill="#f0f0f0"/><path d="M16.8 7.8 L9.1 12.3 L16.8 16.6" fill="none" stroke="#f0f0f0" stroke-width="1.8"/></svg><div class="a" style="left:510px;top:296px;width:31px;height:25.5px;background:#5a5a5a;border-radius:5px;border:1px solid #717171;"></div><svg class="a" style="left:510px;top:296px;" width="31" height="25.5" viewBox="0 0 31 25.5"><path d="M9.5 10.05 L15.5 15.45 L21.5 10.05" fill="none" stroke="#f4f4f4" stroke-width="2.4" stroke-linecap="round" stroke-linejoin="round"/></svg><div class="a" style="left:545px;top:296px;width:31px;height:25.5px;background:#5a5a5a;border-radius:5px;border:1px solid #717171;"></div><svg class="a" style="left:547.5px;top:296.5px;" width="26" height="25" viewBox="0 0 26 25"><circle cx="16.8" cy="7.8" r="2.7" fill="#f0f0f0"/><circle cx="9.1" cy="12.3" r="2.7" fill="#f0f0f0"/><circle cx="16.8" cy="16.6" r="2.7" fill="#f0f0f0"/><path d="M16.8 7.8 L9.1 12.3 L16.8 16.6" fill="none" stroke="#f0f0f0" stroke-width="1.8"/></svg><div class="t" style="top:332.90px;font-size:16.15px;line-height:19px;color:#dcdcdc;right:1495px;text-align:right;">Steuer:</div><div class="a" style="left:363px;top:330px;width:211px;height:24px;background:#262626;border-radius:5px;border:1px solid #353535;"></div><div class="a" style="left:553px;top:332px;width:19px;height:19px;background:#5b5b5b;border-radius:4px;"></div><svg class="a" style="left:553px;top:332px;" width="19" height="19" viewBox="0 0 19 19"><path d="M5.0 7.475 L9.5 11.525 L14.0 7.475" fill="none" stroke="#f0f0f0" stroke-width="1.8" stroke-linecap="round" stroke-linejoin="round"/></svg><div class="t" style="top:334.34px;font-size:14.89px;line-height:18px;color:#e8e8e8;left:367px;">VS8.1B</div><div class="t" style="top:366.67px;font-size:15.37px;line-height:18px;color:#dcdcdc;right:1495px;text-align:right;">KoSt 1:</div><div class="a" style="left:363px;top:363px;width:211px;height:24px;background:#232323;border-radius:5px;border:1px solid #2c2c2c;"></div><div class="a" style="left:553px;top:365px;width:19px;height:19px;background:#3a3a3a;border-radius:4px;"></div><svg class="a" style="left:553px;top:365px;" width="19" height="19" viewBox="0 0 19 19"><path d="M5.5 7.7 L9.5 11.3 L13.5 7.7" fill="none" stroke="#777777" stroke-width="1.3" stroke-linecap="round" stroke-linejoin="round"/></svg><div class="t" style="top:398.94px;font-size:16.05px;line-height:19px;color:#dcdcdc;right:1495px;text-align:right;">KoSt 2:</div><div class="a" style="left:363px;top:396px;width:211px;height:24px;background:#232323;border-radius:5px;border:1px solid #2c2c2c;"></div><div class="a" style="left:553px;top:398px;width:19px;height:19px;background:#3a3a3a;border-radius:4px;"></div><svg class="a" style="left:553px;top:398px;" width="19" height="19" viewBox="0 0 19 19"><path d="M5.5 7.7 L9.5 11.3 L13.5 7.7" fill="none" stroke="#777777" stroke-width="1.3" stroke-linecap="round" stroke-linejoin="round"/></svg><div class="t" style="top:430.57px;font-size:17.11px;line-height:21px;color:#dcdcdc;right:1495px;text-align:right;">Notiz:</div><div class="a" style="left:363px;top:429px;width:1454px;height:23px;background:#232323;border-bottom:1px solid #2e2e2e;border-top:1px solid #2a2a2a;"></div><div class="a" style="left:1690px;top:464.5px;width:126px;height:22px;background:#555555;border-radius:5px;"></div><div class="t" style="top:465.39px;font-size:16.2px;line-height:19px;color:#cfcfcf;right:52px;text-align:right;">Anhänge...</div><div class="a" style="left:265px;top:497px;width:1575px;height:1px;background:#474747;"></div><div class="a" style="left:265px;top:498px;width:225px;height:26px;background:#262626;"></div><div class="t" style="top:502.80px;font-size:15.02px;line-height:18px;color:#e0e0e0;left:271px;">Digitale Belege</div><div class="a" style="left:490px;top:498px;width:1px;height:650px;background:#3c3c3c;"></div><div class="a" style="left:491px;top:498px;width:1349px;height:26px;background:#262626;"></div><div class="a" style="left:491px;top:523px;width:1349px;height:1px;background:#2e2e2e;"></div><div class="t" style="top:502.68px;font-size:15.35px;line-height:18px;color:#e0e0e0;left:499px;">Art</div><div class="t" style="top:502.70px;font-size:15.3px;line-height:18px;color:#e0e0e0;left:538px;">F</div><svg class="a" style="left:562px;top:503px;" width="17" height="17" viewBox="0 0 17 17"><g fill="none" stroke="#d6d6d6" stroke-width="1.3"><rect x="1.5" y="2.5" width="7.5" height="5.5" rx="2.75" transform="rotate(40 5.25 5.25)"/><rect x="7.5" y="8.5" width="7.5" height="5.5" rx="2.75" transform="rotate(40 11.25 11.25)"/></g></svg><div class="t" style="top:502.69px;font-size:15.32px;line-height:18px;color:#e0e0e0;left:590px;">Datum</div><div class="t" style="top:502.15px;font-size:15.45px;line-height:19px;color:#e0e0e0;left:684px;">Beleg-Nr</div><div class="a" style="left:527px;top:501px;width:1px;height:20px;background:#3a3a3a;"></div><div class="a" style="left:555px;top:501px;width:1px;height:20px;background:#3a3a3a;"></div><div class="a" style="left:583px;top:501px;width:1px;height:20px;background:#3a3a3a;"></div><div class="a" style="left:677px;top:501px;width:1px;height:20px;background:#3a3a3a;"></div><div class="a" style="left:819px;top:501px;width:1px;height:20px;background:#3a3a3a;"></div><div class="a" style="left:1287px;top:501px;width:1px;height:20px;background:#3a3a3a;"></div><div class="a" style="left:1394px;top:501px;width:1px;height:20px;background:#3a3a3a;"></div><div class="a" style="left:1502px;top:501px;width:1px;height:20px;background:#3a3a3a;"></div><div class="a" style="left:1642px;top:501px;width:1px;height:20px;background:#3a3a3a;"></div><div class="a" style="left:491px;top:524px;width:1349px;height:26px;background:#1e1e1e;"></div><div class="a" style="left:527px;top:524px;width:1px;height:26px;background:#4a4a4a;"></div><div class="a" style="left:555px;top:524px;width:1px;height:26px;background:#4a4a4a;"></div><div class="a" style="left:583px;top:524px;width:1px;height:26px;background:#4a4a4a;"></div><div class="a" style="left:677px;top:524px;width:1px;height:26px;background:#4a4a4a;"></div><div class="a" style="left:819px;top:524px;width:1px;height:26px;background:#4a4a4a;"></div><div class="a" style="left:1287px;top:524px;width:1px;height:26px;background:#4a4a4a;"></div><div class="a" style="left:1394px;top:524px;width:1px;height:26px;background:#4a4a4a;"></div><div class="a" style="left:1502px;top:524px;width:1px;height:26px;background:#4a4a4a;"></div><div class="a" style="left:1642px;top:524px;width:1px;height:26px;background:#4a4a4a;"></div><div class="a" style="left:495px;top:529.0px;width:26px;height:18px;background:#ffffff;border-left:7px solid #f1a65b;box-shadow:0 0 0 0.5px #f1a65b;"></div><div class="t" style="top:528.95px;font-size:14px;line-height:17px;color:#111;left:501.2px;width:20px;text-align:center;transform:scaleX(0.88);transform-origin:50% 0;">E</div><div class="t" style="top:527.99px;font-size:15.9px;line-height:19px;color:#e4e4e4;left:589.5px;transform:scaleX(0.918);transform-origin:0 0;">01.01.2026</div><div class="t" style="top:527.99px;font-size:15.9px;line-height:19px;color:#e4e4e4;left:684px;transform:scaleX(0.93);transform-origin:0 0;">1</div><div class="a" style="left:491px;top:550px;width:1349px;height:25px;background:#2b2c2f;"></div><div class="a" style="left:527px;top:550px;width:1px;height:25px;background:#4a4a4a;"></div><div class="a" style="left:555px;top:550px;width:1px;height:25px;background:#4a4a4a;"></div><div class="a" style="left:583px;top:550px;width:1px;height:25px;background:#4a4a4a;"></div><div class="a" style="left:677px;top:550px;width:1px;height:25px;background:#4a4a4a;"></div><div class="a" style="left:819px;top:550px;width:1px;height:25px;background:#4a4a4a;"></div><div class="a" style="left:1287px;top:550px;width:1px;height:25px;background:#4a4a4a;"></div><div class="a" style="left:1394px;top:550px;width:1px;height:25px;background:#4a4a4a;"></div><div class="a" style="left:1502px;top:550px;width:1px;height:25px;background:#4a4a4a;"></div><div class="a" style="left:1642px;top:550px;width:1px;height:25px;background:#4a4a4a;"></div><div class="a" style="left:495px;top:553.72px;width:26px;height:18px;background:#ffffff;border-left:7px solid #f1a65b;box-shadow:0 0 0 0.5px #f1a65b;"></div><div class="t" style="top:553.67px;font-size:14px;line-height:17px;color:#111;left:501.2px;width:20px;text-align:center;transform:scaleX(0.88);transform-origin:50% 0;">E</div><div class="t" style="top:552.71px;font-size:15.9px;line-height:19px;color:#e4e4e4;left:589.5px;transform:scaleX(0.918);transform-origin:0 0;">01.01.2026</div><div class="t" style="top:552.71px;font-size:15.9px;line-height:19px;color:#e4e4e4;left:684px;transform:scaleX(0.93);transform-origin:0 0;">2</div><div class="a" style="left:491px;top:575px;width:1349px;height:24px;background:#1e1e1e;"></div><div class="a" style="left:527px;top:575px;width:1px;height:24px;background:#4a4a4a;"></div><div class="a" style="left:555px;top:575px;width:1px;height:24px;background:#4a4a4a;"></div><div class="a" style="left:583px;top:575px;width:1px;height:24px;background:#4a4a4a;"></div><div class="a" style="left:677px;top:575px;width:1px;height:24px;background:#4a4a4a;"></div><div class="a" style="left:819px;top:575px;width:1px;height:24px;background:#4a4a4a;"></div><div class="a" style="left:1287px;top:575px;width:1px;height:24px;background:#4a4a4a;"></div><div class="a" style="left:1394px;top:575px;width:1px;height:24px;background:#4a4a4a;"></div><div class="a" style="left:1502px;top:575px;width:1px;height:24px;background:#4a4a4a;"></div><div class="a" style="left:1642px;top:575px;width:1px;height:24px;background:#4a4a4a;"></div><div class="a" style="left:495px;top:578.4399999999999px;width:26px;height:18px;background:#ffffff;border-left:7px solid #f1a65b;box-shadow:0 0 0 0.5px #f1a65b;"></div><div class="t" style="top:578.39px;font-size:14px;line-height:17px;color:#111;left:501.2px;width:20px;text-align:center;transform:scaleX(0.88);transform-origin:50% 0;">E</div><div class="t" style="top:577.43px;font-size:15.9px;line-height:19px;color:#e4e4e4;left:589.5px;transform:scaleX(0.918);transform-origin:0 0;">01.01.2026</div><div class="t" style="top:577.43px;font-size:15.9px;line-height:19px;color:#e4e4e4;left:684px;transform:scaleX(0.93);transform-origin:0 0;">3</div><div class="a" style="left:491px;top:599px;width:1349px;height:25px;background:#2b2c2f;"></div><div class="a" style="left:527px;top:599px;width:1px;height:25px;background:#4a4a4a;"></div><div class="a" style="left:555px;top:599px;width:1px;height:25px;background:#4a4a4a;"></div><div class="a" style="left:583px;top:599px;width:1px;height:25px;background:#4a4a4a;"></div><div class="a" style="left:677px;top:599px;width:1px;height:25px;background:#4a4a4a;"></div><div class="a" style="left:819px;top:599px;width:1px;height:25px;background:#4a4a4a;"></div><div class="a" style="left:1287px;top:599px;width:1px;height:25px;background:#4a4a4a;"></div><div class="a" style="left:1394px;top:599px;width:1px;height:25px;background:#4a4a4a;"></div><div class="a" style="left:1502px;top:599px;width:1px;height:25px;background:#4a4a4a;"></div><div class="a" style="left:1642px;top:599px;width:1px;height:25px;background:#4a4a4a;"></div><div class="a" style="left:495px;top:603.16px;width:26px;height:18px;background:#ffffff;border-left:7px solid #f1a65b;box-shadow:0 0 0 0.5px #f1a65b;"></div><div class="t" style="top:603.11px;font-size:14px;line-height:17px;color:#111;left:501.2px;width:20px;text-align:center;transform:scaleX(0.88);transform-origin:50% 0;">E</div><div class="t" style="top:602.15px;font-size:15.9px;line-height:19px;color:#e4e4e4;left:589.5px;transform:scaleX(0.918);transform-origin:0 0;">01.01.2026</div><div class="t" style="top:602.15px;font-size:15.9px;line-height:19px;color:#e4e4e4;left:684px;transform:scaleX(0.93);transform-origin:0 0;">4</div><div class="a" style="left:491px;top:624px;width:1349px;height:25px;background:#1e1e1e;"></div><div class="a" style="left:527px;top:624px;width:1px;height:25px;background:#4a4a4a;"></div><div class="a" style="left:555px;top:624px;width:1px;height:25px;background:#4a4a4a;"></div><div class="a" style="left:583px;top:624px;width:1px;height:25px;background:#4a4a4a;"></div><div class="a" style="left:677px;top:624px;width:1px;height:25px;background:#4a4a4a;"></div><div class="a" style="left:819px;top:624px;width:1px;height:25px;background:#4a4a4a;"></div><div class="a" style="left:1287px;top:624px;width:1px;height:25px;background:#4a4a4a;"></div><div class="a" style="left:1394px;top:624px;width:1px;height:25px;background:#4a4a4a;"></div><div class="a" style="left:1502px;top:624px;width:1px;height:25px;background:#4a4a4a;"></div><div class="a" style="left:1642px;top:624px;width:1px;height:25px;background:#4a4a4a;"></div><div class="a" style="left:495px;top:627.88px;width:26px;height:18px;background:#ffffff;border-left:7px solid #f1a65b;box-shadow:0 0 0 0.5px #f1a65b;"></div><div class="t" style="top:627.83px;font-size:14px;line-height:17px;color:#111;left:501.2px;width:20px;text-align:center;transform:scaleX(0.88);transform-origin:50% 0;">E</div><div class="t" style="top:626.87px;font-size:15.9px;line-height:19px;color:#e4e4e4;left:589.5px;transform:scaleX(0.918);transform-origin:0 0;">01.01.2026</div><div class="t" style="top:626.87px;font-size:15.9px;line-height:19px;color:#e4e4e4;left:684px;transform:scaleX(0.93);transform-origin:0 0;">5</div><div class="a" style="left:491px;top:649px;width:1349px;height:24px;background:#2b2c2f;"></div><div class="a" style="left:527px;top:649px;width:1px;height:24px;background:#4a4a4a;"></div><div class="a" style="left:555px;top:649px;width:1px;height:24px;background:#4a4a4a;"></div><div class="a" style="left:583px;top:649px;width:1px;height:24px;background:#4a4a4a;"></div><div class="a" style="left:677px;top:649px;width:1px;height:24px;background:#4a4a4a;"></div><div class="a" style="left:819px;top:649px;width:1px;height:24px;background:#4a4a4a;"></div><div class="a" style="left:1287px;top:649px;width:1px;height:24px;background:#4a4a4a;"></div><div class="a" style="left:1394px;top:649px;width:1px;height:24px;background:#4a4a4a;"></div><div class="a" style="left:1502px;top:649px;width:1px;height:24px;background:#4a4a4a;"></div><div class="a" style="left:1642px;top:649px;width:1px;height:24px;background:#4a4a4a;"></div><div class="a" style="left:495px;top:652.6px;width:26px;height:18px;background:#ffffff;border-left:7px solid #f1a65b;box-shadow:0 0 0 0.5px #f1a65b;"></div><div class="t" style="top:652.55px;font-size:14px;line-height:17px;color:#111;left:501.2px;width:20px;text-align:center;transform:scaleX(0.88);transform-origin:50% 0;">E</div><div class="t" style="top:651.59px;font-size:15.9px;line-height:19px;color:#e4e4e4;left:589.5px;transform:scaleX(0.918);transform-origin:0 0;">01.01.2026</div><div class="t" style="top:651.59px;font-size:15.9px;line-height:19px;color:#e4e4e4;left:684px;transform:scaleX(0.93);transform-origin:0 0;">6</div><div class="a" style="left:491px;top:673px;width:1349px;height:25px;background:#1e1e1e;"></div><div class="a" style="left:527px;top:673px;width:1px;height:25px;background:#4a4a4a;"></div><div class="a" style="left:555px;top:673px;width:1px;height:25px;background:#4a4a4a;"></div><div class="a" style="left:583px;top:673px;width:1px;height:25px;background:#4a4a4a;"></div><div class="a" style="left:677px;top:673px;width:1px;height:25px;background:#4a4a4a;"></div><div class="a" style="left:819px;top:673px;width:1px;height:25px;background:#4a4a4a;"></div><div class="a" style="left:1287px;top:673px;width:1px;height:25px;background:#4a4a4a;"></div><div class="a" style="left:1394px;top:673px;width:1px;height:25px;background:#4a4a4a;"></div><div class="a" style="left:1502px;top:673px;width:1px;height:25px;background:#4a4a4a;"></div><div class="a" style="left:1642px;top:673px;width:1px;height:25px;background:#4a4a4a;"></div><div class="a" style="left:495px;top:677.32px;width:26px;height:18px;background:#ffffff;border-left:7px solid #f1a65b;box-shadow:0 0 0 0.5px #f1a65b;"></div><div class="t" style="top:677.27px;font-size:14px;line-height:17px;color:#111;left:501.2px;width:20px;text-align:center;transform:scaleX(0.88);transform-origin:50% 0;">E</div><div class="t" style="top:676.31px;font-size:15.9px;line-height:19px;color:#e4e4e4;left:589.5px;transform:scaleX(0.918);transform-origin:0 0;">01.01.2026</div><div class="t" style="top:676.31px;font-size:15.9px;line-height:19px;color:#e4e4e4;left:684px;transform:scaleX(0.93);transform-origin:0 0;">7</div><div class="a" style="left:491px;top:698px;width:1349px;height:25px;background:#2b2c2f;"></div><div class="a" style="left:527px;top:698px;width:1px;height:25px;background:#4a4a4a;"></div><div class="a" style="left:555px;top:698px;width:1px;height:25px;background:#4a4a4a;"></div><div class="a" style="left:583px;top:698px;width:1px;height:25px;background:#4a4a4a;"></div><div class="a" style="left:677px;top:698px;width:1px;height:25px;background:#4a4a4a;"></div><div class="a" style="left:819px;top:698px;width:1px;height:25px;background:#4a4a4a;"></div><div class="a" style="left:1287px;top:698px;width:1px;height:25px;background:#4a4a4a;"></div><div class="a" style="left:1394px;top:698px;width:1px;height:25px;background:#4a4a4a;"></div><div class="a" style="left:1502px;top:698px;width:1px;height:25px;background:#4a4a4a;"></div><div class="a" style="left:1642px;top:698px;width:1px;height:25px;background:#4a4a4a;"></div><div class="a" style="left:495px;top:702.04px;width:26px;height:18px;background:#ffffff;border-left:7px solid #f1a65b;box-shadow:0 0 0 0.5px #f1a65b;"></div><div class="t" style="top:701.99px;font-size:14px;line-height:17px;color:#111;left:501.2px;width:20px;text-align:center;transform:scaleX(0.88);transform-origin:50% 0;">E</div><div class="t" style="top:701.03px;font-size:15.9px;line-height:19px;color:#e4e4e4;left:589.5px;transform:scaleX(0.918);transform-origin:0 0;">01.01.2026</div><div class="t" style="top:701.03px;font-size:15.9px;line-height:19px;color:#e4e4e4;left:684px;transform:scaleX(0.93);transform-origin:0 0;">8</div><div class="a" style="left:491px;top:723px;width:1349px;height:25px;background:#1e1e1e;"></div><div class="a" style="left:527px;top:723px;width:1px;height:25px;background:#4a4a4a;"></div><div class="a" style="left:555px;top:723px;width:1px;height:25px;background:#4a4a4a;"></div><div class="a" style="left:583px;top:723px;width:1px;height:25px;background:#4a4a4a;"></div><div class="a" style="left:677px;top:723px;width:1px;height:25px;background:#4a4a4a;"></div><div class="a" style="left:819px;top:723px;width:1px;height:25px;background:#4a4a4a;"></div><div class="a" style="left:1287px;top:723px;width:1px;height:25px;background:#4a4a4a;"></div><div class="a" style="left:1394px;top:723px;width:1px;height:25px;background:#4a4a4a;"></div><div class="a" style="left:1502px;top:723px;width:1px;height:25px;background:#4a4a4a;"></div><div class="a" style="left:1642px;top:723px;width:1px;height:25px;background:#4a4a4a;"></div><div class="a" style="left:495px;top:726.76px;width:26px;height:18px;background:#ffffff;border-left:7px solid #f1a65b;box-shadow:0 0 0 0.5px #f1a65b;"></div><div class="t" style="top:726.71px;font-size:14px;line-height:17px;color:#111;left:501.2px;width:20px;text-align:center;transform:scaleX(0.88);transform-origin:50% 0;">E</div><div class="t" style="top:725.75px;font-size:15.9px;line-height:19px;color:#e4e4e4;left:589.5px;transform:scaleX(0.918);transform-origin:0 0;">01.01.2026</div><div class="t" style="top:725.75px;font-size:15.9px;line-height:19px;color:#e4e4e4;left:684px;transform:scaleX(0.93);transform-origin:0 0;">9</div><div class="a" style="left:491px;top:748px;width:1349px;height:24px;background:#2b2c2f;"></div><div class="a" style="left:527px;top:748px;width:1px;height:24px;background:#4a4a4a;"></div><div class="a" style="left:555px;top:748px;width:1px;height:24px;background:#4a4a4a;"></div><div class="a" style="left:583px;top:748px;width:1px;height:24px;background:#4a4a4a;"></div><div class="a" style="left:677px;top:748px;width:1px;height:24px;background:#4a4a4a;"></div><div class="a" style="left:819px;top:748px;width:1px;height:24px;background:#4a4a4a;"></div><div class="a" style="left:1287px;top:748px;width:1px;height:24px;background:#4a4a4a;"></div><div class="a" style="left:1394px;top:748px;width:1px;height:24px;background:#4a4a4a;"></div><div class="a" style="left:1502px;top:748px;width:1px;height:24px;background:#4a4a4a;"></div><div class="a" style="left:1642px;top:748px;width:1px;height:24px;background:#4a4a4a;"></div><div class="a" style="left:495px;top:751.48px;width:26px;height:18px;background:#ffffff;border-left:7px solid #f1a65b;box-shadow:0 0 0 0.5px #f1a65b;"></div><div class="t" style="top:751.43px;font-size:14px;line-height:17px;color:#111;left:501.2px;width:20px;text-align:center;transform:scaleX(0.88);transform-origin:50% 0;">E</div><div class="t" style="top:750.47px;font-size:15.9px;line-height:19px;color:#e4e4e4;left:589.5px;transform:scaleX(0.918);transform-origin:0 0;">01.01.2026</div><div class="t" style="top:750.47px;font-size:15.9px;line-height:19px;color:#e4e4e4;left:684px;transform:scaleX(0.93);transform-origin:0 0;">10</div><div class="a" style="left:491px;top:772px;width:1349px;height:25px;background:#1e1e1e;"></div><div class="a" style="left:527px;top:772px;width:1px;height:25px;background:#4a4a4a;"></div><div class="a" style="left:555px;top:772px;width:1px;height:25px;background:#4a4a4a;"></div><div class="a" style="left:583px;top:772px;width:1px;height:25px;background:#4a4a4a;"></div><div class="a" style="left:677px;top:772px;width:1px;height:25px;background:#4a4a4a;"></div><div class="a" style="left:819px;top:772px;width:1px;height:25px;background:#4a4a4a;"></div><div class="a" style="left:1287px;top:772px;width:1px;height:25px;background:#4a4a4a;"></div><div class="a" style="left:1394px;top:772px;width:1px;height:25px;background:#4a4a4a;"></div><div class="a" style="left:1502px;top:772px;width:1px;height:25px;background:#4a4a4a;"></div><div class="a" style="left:1642px;top:772px;width:1px;height:25px;background:#4a4a4a;"></div><div class="a" style="left:495px;top:776.1999999999999px;width:26px;height:18px;background:#ffffff;border-left:7px solid #f1a65b;box-shadow:0 0 0 0.5px #f1a65b;"></div><div class="t" style="top:776.15px;font-size:14px;line-height:17px;color:#111;left:501.2px;width:20px;text-align:center;transform:scaleX(0.88);transform-origin:50% 0;">E</div><div class="t" style="top:775.19px;font-size:15.9px;line-height:19px;color:#e4e4e4;left:589.5px;transform:scaleX(0.918);transform-origin:0 0;">01.01.2026</div><div class="t" style="top:775.19px;font-size:15.9px;line-height:19px;color:#e4e4e4;left:684px;transform:scaleX(0.93);transform-origin:0 0;">11</div><div class="a" style="left:491px;top:797px;width:1349px;height:25px;background:#2b2c2f;"></div><div class="a" style="left:527px;top:797px;width:1px;height:25px;background:#4a4a4a;"></div><div class="a" style="left:555px;top:797px;width:1px;height:25px;background:#4a4a4a;"></div><div class="a" style="left:583px;top:797px;width:1px;height:25px;background:#4a4a4a;"></div><div class="a" style="left:677px;top:797px;width:1px;height:25px;background:#4a4a4a;"></div><div class="a" style="left:819px;top:797px;width:1px;height:25px;background:#4a4a4a;"></div><div class="a" style="left:1287px;top:797px;width:1px;height:25px;background:#4a4a4a;"></div><div class="a" style="left:1394px;top:797px;width:1px;height:25px;background:#4a4a4a;"></div><div class="a" style="left:1502px;top:797px;width:1px;height:25px;background:#4a4a4a;"></div><div class="a" style="left:1642px;top:797px;width:1px;height:25px;background:#4a4a4a;"></div><div class="a" style="left:495px;top:800.92px;width:26px;height:18px;background:#ffffff;border-left:7px solid #f1a65b;box-shadow:0 0 0 0.5px #f1a65b;"></div><div class="t" style="top:800.87px;font-size:14px;line-height:17px;color:#111;left:501.2px;width:20px;text-align:center;transform:scaleX(0.88);transform-origin:50% 0;">E</div><div class="t" style="top:799.91px;font-size:15.9px;line-height:19px;color:#e4e4e4;left:589.5px;transform:scaleX(0.918);transform-origin:0 0;">01.01.2026</div><div class="t" style="top:799.91px;font-size:15.9px;line-height:19px;color:#e4e4e4;left:684px;transform:scaleX(0.93);transform-origin:0 0;">12</div><div class="a" style="left:491px;top:822px;width:1349px;height:24px;background:#1e1e1e;"></div><div class="a" style="left:527px;top:822px;width:1px;height:24px;background:#4a4a4a;"></div><div class="a" style="left:555px;top:822px;width:1px;height:24px;background:#4a4a4a;"></div><div class="a" style="left:583px;top:822px;width:1px;height:24px;background:#4a4a4a;"></div><div class="a" style="left:677px;top:822px;width:1px;height:24px;background:#4a4a4a;"></div><div class="a" style="left:819px;top:822px;width:1px;height:24px;background:#4a4a4a;"></div><div class="a" style="left:1287px;top:822px;width:1px;height:24px;background:#4a4a4a;"></div><div class="a" style="left:1394px;top:822px;width:1px;height:24px;background:#4a4a4a;"></div><div class="a" style="left:1502px;top:822px;width:1px;height:24px;background:#4a4a4a;"></div><div class="a" style="left:1642px;top:822px;width:1px;height:24px;background:#4a4a4a;"></div><div class="a" style="left:495px;top:825.64px;width:26px;height:18px;background:#ffffff;border-left:7px solid #f1a65b;box-shadow:0 0 0 0.5px #f1a65b;"></div><div class="t" style="top:825.59px;font-size:14px;line-height:17px;color:#111;left:501.2px;width:20px;text-align:center;transform:scaleX(0.88);transform-origin:50% 0;">E</div><div class="t" style="top:824.63px;font-size:15.9px;line-height:19px;color:#e4e4e4;left:589.5px;transform:scaleX(0.918);transform-origin:0 0;">01.01.2026</div><div class="t" style="top:824.63px;font-size:15.9px;line-height:19px;color:#e4e4e4;left:684px;transform:scaleX(0.93);transform-origin:0 0;">13</div><div class="a" style="left:491px;top:846px;width:1349px;height:25px;background:#2b2c2f;"></div><div class="a" style="left:527px;top:846px;width:1px;height:25px;background:#4a4a4a;"></div><div class="a" style="left:555px;top:846px;width:1px;height:25px;background:#4a4a4a;"></div><div class="a" style="left:583px;top:846px;width:1px;height:25px;background:#4a4a4a;"></div><div class="a" style="left:677px;top:846px;width:1px;height:25px;background:#4a4a4a;"></div><div class="a" style="left:819px;top:846px;width:1px;height:25px;background:#4a4a4a;"></div><div class="a" style="left:1287px;top:846px;width:1px;height:25px;background:#4a4a4a;"></div><div class="a" style="left:1394px;top:846px;width:1px;height:25px;background:#4a4a4a;"></div><div class="a" style="left:1502px;top:846px;width:1px;height:25px;background:#4a4a4a;"></div><div class="a" style="left:1642px;top:846px;width:1px;height:25px;background:#4a4a4a;"></div><div class="a" style="left:495px;top:850.36px;width:26px;height:18px;background:#ffffff;border-left:7px solid #f1a65b;box-shadow:0 0 0 0.5px #f1a65b;"></div><div class="t" style="top:850.31px;font-size:14px;line-height:17px;color:#111;left:501.2px;width:20px;text-align:center;transform:scaleX(0.88);transform-origin:50% 0;">E</div><div class="t" style="top:849.35px;font-size:15.9px;line-height:19px;color:#e4e4e4;left:589.5px;transform:scaleX(0.918);transform-origin:0 0;">01.01.2026</div><div class="t" style="top:849.35px;font-size:15.9px;line-height:19px;color:#e4e4e4;left:684px;transform:scaleX(0.93);transform-origin:0 0;">14</div><div class="a" style="left:491px;top:871px;width:1349px;height:25px;background:#1e1e1e;"></div><div class="a" style="left:527px;top:871px;width:1px;height:25px;background:#4a4a4a;"></div><div class="a" style="left:555px;top:871px;width:1px;height:25px;background:#4a4a4a;"></div><div class="a" style="left:583px;top:871px;width:1px;height:25px;background:#4a4a4a;"></div><div class="a" style="left:677px;top:871px;width:1px;height:25px;background:#4a4a4a;"></div><div class="a" style="left:819px;top:871px;width:1px;height:25px;background:#4a4a4a;"></div><div class="a" style="left:1287px;top:871px;width:1px;height:25px;background:#4a4a4a;"></div><div class="a" style="left:1394px;top:871px;width:1px;height:25px;background:#4a4a4a;"></div><div class="a" style="left:1502px;top:871px;width:1px;height:25px;background:#4a4a4a;"></div><div class="a" style="left:1642px;top:871px;width:1px;height:25px;background:#4a4a4a;"></div><div class="a" style="left:495px;top:875.08px;width:26px;height:18px;background:#ffffff;border-left:7px solid #f1a65b;box-shadow:0 0 0 0.5px #f1a65b;"></div><div class="t" style="top:875.03px;font-size:14px;line-height:17px;color:#111;left:501.2px;width:20px;text-align:center;transform:scaleX(0.88);transform-origin:50% 0;">E</div><div class="t" style="top:874.07px;font-size:15.9px;line-height:19px;color:#e4e4e4;left:589.5px;transform:scaleX(0.918);transform-origin:0 0;">01.01.2026</div><div class="t" style="top:874.07px;font-size:15.9px;line-height:19px;color:#e4e4e4;left:684px;transform:scaleX(0.93);transform-origin:0 0;">15</div><div class="a" style="left:491px;top:896px;width:1349px;height:25px;background:#2b2c2f;"></div><div class="a" style="left:527px;top:896px;width:1px;height:25px;background:#4a4a4a;"></div><div class="a" style="left:555px;top:896px;width:1px;height:25px;background:#4a4a4a;"></div><div class="a" style="left:583px;top:896px;width:1px;height:25px;background:#4a4a4a;"></div><div class="a" style="left:677px;top:896px;width:1px;height:25px;background:#4a4a4a;"></div><div class="a" style="left:819px;top:896px;width:1px;height:25px;background:#4a4a4a;"></div><div class="a" style="left:1287px;top:896px;width:1px;height:25px;background:#4a4a4a;"></div><div class="a" style="left:1394px;top:896px;width:1px;height:25px;background:#4a4a4a;"></div><div class="a" style="left:1502px;top:896px;width:1px;height:25px;background:#4a4a4a;"></div><div class="a" style="left:1642px;top:896px;width:1px;height:25px;background:#4a4a4a;"></div><div class="a" style="left:495px;top:899.8px;width:26px;height:18px;background:#ffffff;border-left:7px solid #f1a65b;box-shadow:0 0 0 0.5px #f1a65b;"></div><div class="t" style="top:899.75px;font-size:14px;line-height:17px;color:#111;left:501.2px;width:20px;text-align:center;transform:scaleX(0.88);transform-origin:50% 0;">E</div><div class="t" style="top:898.79px;font-size:15.9px;line-height:19px;color:#e4e4e4;left:589.5px;transform:scaleX(0.918);transform-origin:0 0;">01.01.2026</div><div class="t" style="top:898.79px;font-size:15.9px;line-height:19px;color:#e4e4e4;left:684px;transform:scaleX(0.93);transform-origin:0 0;">16</div><div class="a" style="left:491px;top:921px;width:1349px;height:24px;background:#1e1e1e;"></div><div class="a" style="left:527px;top:921px;width:1px;height:24px;background:#4a4a4a;"></div><div class="a" style="left:555px;top:921px;width:1px;height:24px;background:#4a4a4a;"></div><div class="a" style="left:583px;top:921px;width:1px;height:24px;background:#4a4a4a;"></div><div class="a" style="left:677px;top:921px;width:1px;height:24px;background:#4a4a4a;"></div><div class="a" style="left:819px;top:921px;width:1px;height:24px;background:#4a4a4a;"></div><div class="a" style="left:1287px;top:921px;width:1px;height:24px;background:#4a4a4a;"></div><div class="a" style="left:1394px;top:921px;width:1px;height:24px;background:#4a4a4a;"></div><div class="a" style="left:1502px;top:921px;width:1px;height:24px;background:#4a4a4a;"></div><div class="a" style="left:1642px;top:921px;width:1px;height:24px;background:#4a4a4a;"></div><div class="a" style="left:495px;top:924.52px;width:26px;height:18px;background:#ffffff;border-left:7px solid #f1a65b;box-shadow:0 0 0 0.5px #f1a65b;"></div><div class="t" style="top:924.47px;font-size:14px;line-height:17px;color:#111;left:501.2px;width:20px;text-align:center;transform:scaleX(0.88);transform-origin:50% 0;">E</div><div class="t" style="top:923.51px;font-size:15.9px;line-height:19px;color:#e4e4e4;left:589.5px;transform:scaleX(0.918);transform-origin:0 0;">01.01.2026</div><div class="t" style="top:923.51px;font-size:15.9px;line-height:19px;color:#e4e4e4;left:684px;transform:scaleX(0.93);transform-origin:0 0;">17</div><div class="a" style="left:491px;top:945px;width:1349px;height:25px;background:#2b2c2f;"></div><div class="a" style="left:527px;top:945px;width:1px;height:25px;background:#4a4a4a;"></div><div class="a" style="left:555px;top:945px;width:1px;height:25px;background:#4a4a4a;"></div><div class="a" style="left:583px;top:945px;width:1px;height:25px;background:#4a4a4a;"></div><div class="a" style="left:677px;top:945px;width:1px;height:25px;background:#4a4a4a;"></div><div class="a" style="left:819px;top:945px;width:1px;height:25px;background:#4a4a4a;"></div><div class="a" style="left:1287px;top:945px;width:1px;height:25px;background:#4a4a4a;"></div><div class="a" style="left:1394px;top:945px;width:1px;height:25px;background:#4a4a4a;"></div><div class="a" style="left:1502px;top:945px;width:1px;height:25px;background:#4a4a4a;"></div><div class="a" style="left:1642px;top:945px;width:1px;height:25px;background:#4a4a4a;"></div><div class="a" style="left:495px;top:949.24px;width:26px;height:18px;background:#ffffff;border-left:7px solid #f1a65b;box-shadow:0 0 0 0.5px #f1a65b;"></div><div class="t" style="top:949.19px;font-size:14px;line-height:17px;color:#111;left:501.2px;width:20px;text-align:center;transform:scaleX(0.88);transform-origin:50% 0;">E</div><div class="t" style="top:948.23px;font-size:15.9px;line-height:19px;color:#e4e4e4;left:589.5px;transform:scaleX(0.918);transform-origin:0 0;">01.01.2026</div><div class="t" style="top:948.23px;font-size:15.9px;line-height:19px;color:#e4e4e4;left:684px;transform:scaleX(0.93);transform-origin:0 0;">18</div><div class="a" style="left:491px;top:970px;width:1349px;height:25px;background:#1e1e1e;"></div><div class="a" style="left:527px;top:970px;width:1px;height:25px;background:#4a4a4a;"></div><div class="a" style="left:555px;top:970px;width:1px;height:25px;background:#4a4a4a;"></div><div class="a" style="left:583px;top:970px;width:1px;height:25px;background:#4a4a4a;"></div><div class="a" style="left:677px;top:970px;width:1px;height:25px;background:#4a4a4a;"></div><div class="a" style="left:819px;top:970px;width:1px;height:25px;background:#4a4a4a;"></div><div class="a" style="left:1287px;top:970px;width:1px;height:25px;background:#4a4a4a;"></div><div class="a" style="left:1394px;top:970px;width:1px;height:25px;background:#4a4a4a;"></div><div class="a" style="left:1502px;top:970px;width:1px;height:25px;background:#4a4a4a;"></div><div class="a" style="left:1642px;top:970px;width:1px;height:25px;background:#4a4a4a;"></div><div class="a" style="left:495px;top:973.9599999999999px;width:26px;height:18px;background:#ffffff;border-left:7px solid #a9a9a9;box-shadow:0 0 0 0.5px #a9a9a9;"></div><div class="t" style="top:973.91px;font-size:14px;line-height:17px;color:#111;left:501.2px;width:20px;text-align:center;transform:scaleX(0.88);transform-origin:50% 0;">M</div><div class="t" style="top:972.95px;font-size:15.9px;line-height:19px;color:#e4e4e4;left:589.5px;transform:scaleX(0.915);transform-origin:0 0;">15.01.2026</div><div class="t" style="top:972.95px;font-size:15.9px;line-height:19px;color:#e4e4e4;left:684px;transform:scaleX(0.93);transform-origin:0 0;">19</div><div class="a" style="left:491px;top:995px;width:1349px;height:25px;background:#2b2c2f;"></div><div class="a" style="left:527px;top:995px;width:1px;height:25px;background:#4a4a4a;"></div><div class="a" style="left:555px;top:995px;width:1px;height:25px;background:#4a4a4a;"></div><div class="a" style="left:583px;top:995px;width:1px;height:25px;background:#4a4a4a;"></div><div class="a" style="left:677px;top:995px;width:1px;height:25px;background:#4a4a4a;"></div><div class="a" style="left:819px;top:995px;width:1px;height:25px;background:#4a4a4a;"></div><div class="a" style="left:1287px;top:995px;width:1px;height:25px;background:#4a4a4a;"></div><div class="a" style="left:1394px;top:995px;width:1px;height:25px;background:#4a4a4a;"></div><div class="a" style="left:1502px;top:995px;width:1px;height:25px;background:#4a4a4a;"></div><div class="a" style="left:1642px;top:995px;width:1px;height:25px;background:#4a4a4a;"></div><div class="a" style="left:495px;top:998.68px;width:26px;height:18px;background:#ffffff;border-left:7px solid #cf8ee9;box-shadow:0 0 0 0.5px #cf8ee9;"></div><div class="t" style="top:998.63px;font-size:14px;line-height:17px;color:#111;left:501.2px;width:20px;text-align:center;transform:scaleX(0.88);transform-origin:50% 0;">K</div><div class="t" style="top:997.67px;font-size:15.9px;line-height:19px;color:#e4e4e4;left:589.5px;transform:scaleX(0.915);transform-origin:0 0;">15.01.2026</div><div class="t" style="top:997.67px;font-size:15.9px;line-height:19px;color:#e4e4e4;left:684px;transform:scaleX(0.93);transform-origin:0 0;">ER-2026-1013</div><div class="t" style="top:998.59px;font-size:14.7px;line-height:18px;color:#a2a2a2;left:824.5px;">Einkauf Nr.: ER-2026-1013, BIKEANDMORE</div><div class="t" style="top:998.52px;font-size:14.9px;line-height:18px;color:#a2a2a2;right:452px;text-align:right;">4000</div><div class="t" style="top:998.52px;font-size:14.9px;line-height:18px;color:#a2a2a2;right:344px;text-align:right;">70002</div><div class="t" style="top:998.52px;font-size:14.9px;line-height:18px;color:#a2a2a2;right:203.5px;text-align:right;">2’468.30</div><div class="t" style="top:998.52px;font-size:14.9px;line-height:18px;color:#a2a2a2;left:1672.0px;width:100px;text-align:center;">VM8.1B</div><div class="a" style="left:491px;top:1020px;width:1349px;height:24px;background:#1e1e1e;"></div><div class="a" style="left:527px;top:1020px;width:1px;height:24px;background:#4a4a4a;"></div><div class="a" style="left:555px;top:1020px;width:1px;height:24px;background:#4a4a4a;"></div><div class="a" style="left:583px;top:1020px;width:1px;height:24px;background:#4a4a4a;"></div><div class="a" style="left:677px;top:1020px;width:1px;height:24px;background:#4a4a4a;"></div><div class="a" style="left:819px;top:1020px;width:1px;height:24px;background:#4a4a4a;"></div><div class="a" style="left:1287px;top:1020px;width:1px;height:24px;background:#4a4a4a;"></div><div class="a" style="left:1394px;top:1020px;width:1px;height:24px;background:#4a4a4a;"></div><div class="a" style="left:1502px;top:1020px;width:1px;height:24px;background:#4a4a4a;"></div><div class="a" style="left:1642px;top:1020px;width:1px;height:24px;background:#4a4a4a;"></div><div class="a" style="left:495px;top:1023.4px;width:26px;height:18px;background:#ffffff;border-left:7px solid #5cc85a;box-shadow:0 0 0 0.5px #5cc85a;"></div><div class="t" style="top:1023.35px;font-size:14px;line-height:17px;color:#111;left:501.2px;width:20px;text-align:center;transform:scaleX(0.88);transform-origin:50% 0;">D</div><div class="t" style="top:1022.39px;font-size:15.9px;line-height:19px;color:#e4e4e4;left:589.5px;transform:scaleX(0.915);transform-origin:0 0;">15.01.2026</div><div class="t" style="top:1022.39px;font-size:15.9px;line-height:19px;color:#e4e4e4;left:684px;transform:scaleX(0.93);transform-origin:0 0;">R-2026-1063</div><div class="t" style="top:1022.39px;font-size:15.9px;line-height:19px;color:#e4e4e4;left:824.5px;transform:scaleX(0.925);transform-origin:0 0;">Rechnung, ReNr: R-2026-1063, LOEWENZAHN</div><div class="t" style="top:1022.39px;font-size:15.9px;line-height:19px;color:#e4e4e4;right:452px;text-align:right;transform:scaleX(0.954);transform-origin:100% 0;">10004</div><div class="t" style="top:1023.24px;font-size:14.9px;line-height:18px;color:#e4e4e4;right:344px;text-align:right;">&lt;div&gt;</div><div class="t" style="top:1022.39px;font-size:15.9px;line-height:19px;color:#e4e4e4;right:203.5px;text-align:right;transform:scaleX(0.938);transform-origin:100% 0;">1’453.80</div><div class="t" style="top:1023.24px;font-size:14.9px;line-height:18px;color:#e4e4e4;left:1672.0px;width:100px;text-align:center;">&lt;div&gt;</div><div class="a" style="left:491px;top:1044px;width:1349px;height:25px;background:#474747;"></div><div class="a" style="left:527px;top:1044px;width:1px;height:25px;background:#5e5e5e;"></div><div class="a" style="left:555px;top:1044px;width:1px;height:25px;background:#5e5e5e;"></div><div class="a" style="left:583px;top:1044px;width:1px;height:25px;background:#5e5e5e;"></div><div class="a" style="left:677px;top:1044px;width:1px;height:25px;background:#5e5e5e;"></div><div class="a" style="left:819px;top:1044px;width:1px;height:25px;background:#5e5e5e;"></div><div class="a" style="left:1287px;top:1044px;width:1px;height:25px;background:#5e5e5e;"></div><div class="a" style="left:1394px;top:1044px;width:1px;height:25px;background:#5e5e5e;"></div><div class="a" style="left:1502px;top:1044px;width:1px;height:25px;background:#5e5e5e;"></div><div class="a" style="left:1642px;top:1044px;width:1px;height:25px;background:#5e5e5e;"></div><div class="a" style="left:495px;top:1048.1200000000001px;width:26px;height:18px;background:#ffffff;border-left:7px solid #a9a9a9;box-shadow:0 0 0 0.5px #a9a9a9;"></div><div class="t" style="top:1048.07px;font-size:14px;line-height:17px;color:#111;left:501.2px;width:20px;text-align:center;transform:scaleX(0.88);transform-origin:50% 0;">M</div><div class="t" style="top:1047.11px;font-size:15.9px;line-height:19px;color:#e4e4e4;left:589.5px;transform:scaleX(0.915);transform-origin:0 0;">21.01.2026</div><div class="t" style="top:1047.11px;font-size:15.9px;line-height:19px;color:#e4e4e4;left:684px;transform:scaleX(0.93);transform-origin:0 0;">20</div><div class="t" style="top:1047.11px;font-size:15.9px;line-height:19px;color:#e4e4e4;left:824.5px;transform:scaleX(0.951);transform-origin:0 0;">Anzeige NZZ, FA 4859004</div><div class="t" style="top:1047.96px;font-size:14.9px;line-height:18px;color:#e4e4e4;right:452px;text-align:right;">6600</div><div class="t" style="top:1047.96px;font-size:14.9px;line-height:18px;color:#e4e4e4;right:344px;text-align:right;">1000</div><div class="a" style="left:1508px;top:1048.6200000000001px;width:4.5px;height:17px;background:#e8605a;"></div><div class="t" style="top:1047.96px;font-size:14.9px;line-height:18px;color:#e4e4e4;right:203.5px;text-align:right;">820.00</div><div class="t" style="top:1047.96px;font-size:14.9px;line-height:18px;color:#e4e4e4;left:1672.0px;width:100px;text-align:center;">VS8.1B</div><div class="a" style="left:491px;top:1069px;width:1349px;height:25px;background:#1e1e1e;"></div><div class="a" style="left:527px;top:1069px;width:1px;height:25px;background:#4a4a4a;"></div><div class="a" style="left:555px;top:1069px;width:1px;height:25px;background:#4a4a4a;"></div><div class="a" style="left:583px;top:1069px;width:1px;height:25px;background:#4a4a4a;"></div><div class="a" style="left:677px;top:1069px;width:1px;height:25px;background:#4a4a4a;"></div><div class="a" style="left:819px;top:1069px;width:1px;height:25px;background:#4a4a4a;"></div><div class="a" style="left:1287px;top:1069px;width:1px;height:25px;background:#4a4a4a;"></div><div class="a" style="left:1394px;top:1069px;width:1px;height:25px;background:#4a4a4a;"></div><div class="a" style="left:1502px;top:1069px;width:1px;height:25px;background:#4a4a4a;"></div><div class="a" style="left:1642px;top:1069px;width:1px;height:25px;background:#4a4a4a;"></div><div class="a" style="left:495px;top:1072.8400000000001px;width:26px;height:18px;background:#ffffff;border-left:7px solid #5cc85a;box-shadow:0 0 0 0.5px #5cc85a;"></div><div class="t" style="top:1072.79px;font-size:14px;line-height:17px;color:#111;left:501.2px;width:20px;text-align:center;transform:scaleX(0.88);transform-origin:50% 0;">D</div><div class="t" style="top:1071.83px;font-size:15.9px;line-height:19px;color:#e4e4e4;left:589.5px;transform:scaleX(0.915);transform-origin:0 0;">23.02.2026</div><div class="t" style="top:1071.83px;font-size:15.9px;line-height:19px;color:#e4e4e4;left:684px;transform:scaleX(0.93);transform-origin:0 0;">R-2026-1064</div><div class="t" style="top:1071.83px;font-size:15.9px;line-height:19px;color:#e4e4e4;left:824.5px;transform:scaleX(0.925);transform-origin:0 0;">Rechnung, ReNr: R-2026-1064, LOEWENZAHN</div><div class="t" style="top:1071.83px;font-size:15.9px;line-height:19px;color:#e4e4e4;right:452px;text-align:right;transform:scaleX(0.954);transform-origin:100% 0;">10004</div><div class="t" style="top:1072.68px;font-size:14.9px;line-height:18px;color:#e4e4e4;right:344px;text-align:right;">&lt;div&gt;</div><div class="t" style="top:1072.68px;font-size:14.9px;line-height:18px;color:#e4e4e4;right:203.5px;text-align:right;">1’236.62</div><div class="t" style="top:1072.68px;font-size:14.9px;line-height:18px;color:#e4e4e4;left:1672.0px;width:100px;text-align:center;">&lt;div&gt;</div><div class="a" style="left:491px;top:1094px;width:1349px;height:24px;background:#2b2c2f;"></div><div class="a" style="left:527px;top:1094px;width:1px;height:24px;background:#4a4a4a;"></div><div class="a" style="left:555px;top:1094px;width:1px;height:24px;background:#4a4a4a;"></div><div class="a" style="left:583px;top:1094px;width:1px;height:24px;background:#4a4a4a;"></div><div class="a" style="left:677px;top:1094px;width:1px;height:24px;background:#4a4a4a;"></div><div class="a" style="left:819px;top:1094px;width:1px;height:24px;background:#4a4a4a;"></div><div class="a" style="left:1287px;top:1094px;width:1px;height:24px;background:#4a4a4a;"></div><div class="a" style="left:1394px;top:1094px;width:1px;height:24px;background:#4a4a4a;"></div><div class="a" style="left:1502px;top:1094px;width:1px;height:24px;background:#4a4a4a;"></div><div class="a" style="left:1642px;top:1094px;width:1px;height:24px;background:#4a4a4a;"></div><div class="a" style="left:495px;top:1097.56px;width:26px;height:18px;background:#ffffff;border-left:7px solid #5cc85a;box-shadow:0 0 0 0.5px #5cc85a;"></div><div class="t" style="top:1097.51px;font-size:14px;line-height:17px;color:#111;left:501.2px;width:20px;text-align:center;transform:scaleX(0.88);transform-origin:50% 0;">D</div><div class="t" style="top:1096.55px;font-size:15.9px;line-height:19px;color:#e4e4e4;left:589.5px;transform:scaleX(0.915);transform-origin:0 0;">16.01.2026</div><div class="t" style="top:1096.55px;font-size:15.9px;line-height:19px;color:#e4e4e4;left:684px;transform:scaleX(0.93);transform-origin:0 0;">R-2026-1063</div><div class="t" style="top:1096.55px;font-size:15.9px;line-height:19px;color:#e4e4e4;left:824.5px;transform:scaleX(0.927);transform-origin:0 0;">Zahlung, ReNr: R-2026-1063, LOEWENZAHN</div><div class="t" style="top:1097.40px;font-size:14.9px;line-height:18px;color:#e4e4e4;right:452px;text-align:right;">1020</div><div class="t" style="top:1096.55px;font-size:15.9px;line-height:19px;color:#e4e4e4;right:344px;text-align:right;transform:scaleX(0.954);transform-origin:100% 0;">10004</div><div class="a" style="left:1508px;top:1098.06px;width:4.5px;height:17px;background:#5ac85a;"></div><div class="t" style="top:1096.55px;font-size:15.9px;line-height:19px;color:#e4e4e4;right:203.5px;text-align:right;transform:scaleX(0.938);transform-origin:100% 0;">1’453.80</div><div class="t" style="top:1097.40px;font-size:14.9px;line-height:18px;color:#e4e4e4;left:1672.0px;width:100px;text-align:center;">-</div><div class="a" style="left:491px;top:1143.5px;width:1349px;height:3.5px;background:#2c2d31;"></div><div class="a" style="left:265px;top:1148px;width:1575px;height:2px;background:#555555;"></div><div class="a" style="left:265px;top:1150px;width:1575px;height:26px;background:#1e1e1e;"></div><div class="t" style="top:1154.17px;font-size:14.81px;line-height:18px;color:#e0e0e0;left:902.2px;width:300px;text-align:center;">1 von 24 ausgewählt</div><div class="a" style="left:0px;top:1176px;width:1840px;height:1px;background:#3a3a3a;"></div><div class="a" style="left:0px;top:1177px;width:1840px;height:2px;background:#1a1a1a;"></div><div class="a" style="left:365px;top:1177px;width:1475px;height:2px;background:#c4c4c4;"></div><div class="a" style="left:0px;top:1177px;width:80px;height:2px;background:#12122a;"></div><svg class="a" style="left:0px;top:1163px;" width="14" height="16" viewBox="0 0 14 16"><path d="M0 2 A11 11 0 0 0 11 13 L14 13 L14 16 L0 16 Z" fill="#100c24"/><path d="M0 2 A11 11 0 0 0 11 13" fill="none" stroke="#444" stroke-width="1"/></svg><svg class="a" style="left:1826px;top:1163px;" width="14" height="16" viewBox="0 0 14 16"><path d="M14 2 A11 11 0 0 1 3 13 L0 13 L0 16 L14 16 Z" fill="#c4c4c4"/><path d="M14 2 A11 11 0 0 1 3 13" fill="none" stroke="#3a3a3a" stroke-width="1"/></svg><div class="a" style="left:799px;top:382px;width:942px;height:621px;background:#1e1e1e;border-radius:10px;box-shadow:0 6px 30px rgba(0,0,0,0.55);border:1px solid #5a5a5a;overflow:hidden;"></div><div class="a" style="left:800px;top:383px;width:940px;height:32px;background:#373737;border-radius:9px 9px 0 0;"></div><div class="a" style="left:800px;top:414px;width:940px;height:1px;background:#161616;"></div><div class="a" style="left:807.8px;top:390.8px;width:14.4px;height:14.4px;background:#ec6a5e;border-radius:50%;"></div><div class="a" style="left:831.5999999999999px;top:390.8px;width:14.4px;height:14.4px;background:#f4bf4f;border-radius:50%;"></div><div class="a" style="left:854.8px;top:390.8px;width:14.4px;height:14.4px;background:#61c554;border-radius:50%;"></div><div class="t" style="top:387.85px;font-size:16.03px;line-height:19px;color:#b4b4b4;font-weight:700;left:1119.4px;width:300px;text-align:center;">Digitale Belege</div><div class="a" style="left:800px;top:415px;width:411px;height:26px;background:#262626;"></div><div class="t" style="top:419.37px;font-size:14.8px;line-height:18px;color:#e6e6e6;left:805px;">Dateiname</div><div class="t" style="top:419.37px;font-size:14.8px;line-height:18px;color:#e6e6e6;left:981px;">Art</div><div class="t" style="top:419.29px;font-size:15.03px;line-height:18px;color:#e6e6e6;left:1045px;">Erhalten</div><div class="t" style="top:419.33px;font-size:14.92px;line-height:18px;color:#e6e6e6;left:1120px;">E-Rechnung</div><div class="a" style="left:975px;top:418px;width:1px;height:20px;background:#3a3a3a;"></div><div class="a" style="left:1034px;top:418px;width:1px;height:20px;background:#3a3a3a;"></div><div class="a" style="left:1110px;top:418px;width:1px;height:20px;background:#3a3a3a;"></div><div class="a" style="left:800px;top:441px;width:411px;height:25px;background:#1e1e1e;"></div><div class="a" style="left:975px;top:441px;width:1px;height:25px;background:#3e3e3e;"></div><div class="a" style="left:1034px;top:441px;width:1px;height:25px;background:#3e3e3e;"></div><div class="a" style="left:1110px;top:441px;width:1px;height:25px;background:#3e3e3e;"></div><div class="a" style="left:800px;top:466px;width:411px;height:25px;background:#2356cc;"></div><div class="a" style="left:975px;top:466px;width:1px;height:25px;background:#4a6fcf;"></div><div class="a" style="left:1034px;top:466px;width:1px;height:25px;background:#4a6fcf;"></div><div class="a" style="left:1110px;top:466px;width:1px;height:25px;background:#4a6fcf;"></div><div class="a" style="left:800px;top:491px;width:411px;height:25px;background:#1e1e1e;"></div><div class="a" style="left:800px;top:516px;width:411px;height:25px;background:#2c2d30;"></div><div class="a" style="left:800px;top:541px;width:411px;height:25px;background:#1e1e1e;"></div><div class="a" style="left:800px;top:566px;width:411px;height:25px;background:#2c2d30;"></div><div class="a" style="left:800px;top:591px;width:411px;height:25px;background:#1e1e1e;"></div><div class="a" style="left:800px;top:616px;width:411px;height:24px;background:#2c2d30;"></div><div class="a" style="left:800px;top:640px;width:411px;height:25px;background:#1e1e1e;"></div><div class="a" style="left:800px;top:665px;width:411px;height:25px;background:#2c2d30;"></div><div class="a" style="left:800px;top:690px;width:411px;height:25px;background:#1e1e1e;"></div><div class="a" style="left:800px;top:715px;width:411px;height:25px;background:#2c2d30;"></div><div class="a" style="left:800px;top:740px;width:411px;height:25px;background:#1e1e1e;"></div><div class="a" style="left:800px;top:765px;width:411px;height:25px;background:#2c2d30;"></div><div class="a" style="left:800px;top:790px;width:411px;height:25px;background:#1e1e1e;"></div><div class="a" style="left:800px;top:815px;width:411px;height:25px;background:#2c2d30;"></div><div class="a" style="left:800px;top:840px;width:411px;height:25px;background:#1e1e1e;"></div><div class="a" style="left:800px;top:865px;width:411px;height:24px;background:#2c2d30;"></div><div class="a" style="left:800px;top:889px;width:411px;height:25px;background:#1e1e1e;"></div><div class="a" style="left:800px;top:914px;width:411px;height:25px;background:#2c2d30;"></div><div class="a" style="left:800px;top:939px;width:411px;height:18px;background:#1e1e1e;"></div><div class="t" style="top:444.73px;font-size:15.2px;line-height:18px;color:#dedede;left:822px;">ebc91c.jpg</div><div class="t" style="top:445.69px;font-size:13.89px;line-height:17px;color:#dedede;left:980px;">JPEG...</div><div class="a" style="left:1061px;top:446.5px;width:14px;height:14px;background:#6e6e6e;border-radius:3px;box-shadow:inset 0 0.5px 0 #8a8a8a;"></div><div class="t" style="top:469.67px;font-size:15.39px;line-height:18px;color:#ffffff;left:822px;">Rechnung 2026-830...</div><div class="t" style="top:469.78px;font-size:15.07px;line-height:18px;color:#ffffff;left:980px;">PDF-...</div><div class="a" style="left:1061px;top:471.5px;width:14px;height:14px;background:#2a66e0;border-radius:3px;box-shadow:0 0 0 0.5px #7aa0f0;"></div><svg class="a" style="left:1061px;top:471.5px;" width="14" height="14" viewBox="0 0 14 14"><path d="M3.2 7.2 L6 10 L11 3.8" fill="none" stroke="#fff" stroke-width="1.6" stroke-linecap="round" stroke-linejoin="round"/></svg><div class="a" style="left:1211px;top:415px;width:1px;height:542px;background:#555555;"></div><div class="a" style="left:1212px;top:415px;width:8px;height:542px;background:#202020;"></div><div class="a" style="left:1215.5px;top:674px;width:1.5px;height:24px;background:#5e5e5e;border-radius:1px;"></div><div class="a" style="left:1220px;top:415px;width:4px;height:542px;background:#7b7b7b;"></div><div class="a" style="left:1224px;top:415px;width:499px;height:542px;background:#ffffff;"></div><div class="a" style="left:1723px;top:415px;width:17px;height:542px;background:#f6f6f6;border-left:1px solid #ececec;"></div><div class="a" style="left:1728px;top:421px;width:9px;height:393px;background:#808080;border-radius:4.5px;"></div><svg class="a" style="left:1255px;top:440px;" width="65" height="57" viewBox="0 0 65 57">
<g stroke="#111" stroke-linejoin="round" stroke-linecap="round">
<path d="M44 8 C48 3 56 5 58.5 14 C60.5 22 61 36 61.2 48 L42 48 L44 23 C42 20 41 15 42 12 Z" fill="#fff" stroke-width="1.3"/>
<path d="M43 6 L45 3 L47.5 4.5 L50 3 L52 5.5 L55 5 L55.5 8 L58 9 L57.5 12 L59.5 13.5 L58 16 L60 17 L58.5 19 C57 13 53 8 47 8 C45.5 8.5 44 9 43 10 Z" fill="#111" stroke-width="0.8"/>
<circle cx="45.3" cy="10.8" r="1.1" fill="none" stroke-width="0.8"/>
<path d="M41.8 14.6 L44.6 15.2 M45 17 L47 21 M47.5 16.5 L49 20" fill="none" stroke-width="0.8"/>
<path d="M4 48 C4 38 6 28 11 21 C14 16 17 11 19 7 L20 5 L22 6 L24 5 L26 6.5 L29 6 C30.5 8 31 10 31 11.5 L34.5 13 C34 14.5 32 15.5 29.5 16 L29 18.5 L36 21.5 L40 24 L36 48 Z" fill="#fff" stroke-width="1.3"/>
<circle cx="27.6" cy="11.6" r="1.5" fill="none" stroke-width="0.9"/>
<path d="M21 13.3 C22 16.5 25 18.2 28.5 18" fill="none" stroke-width="1.6"/>
<path d="M18.5 9 L19.5 5 M21 8 L22.5 4.5 M24 7 L25.5 4.8 M27 6.5 L29 5.5" fill="none" stroke-width="0.8"/>
<path d="M4.2 48 C4 40 5.5 32 8.7 27 C14 26.5 19 23 24 21.6 C29 20.5 33 21 36.5 22.5 L45 25 L52 27.5 C54 28.5 54 30 52.5 31 L52.5 33.5 C53.5 35 52 37 50.5 37 L50 40 C50 41.5 48.5 42.5 47 42.5 L37 46 L30 48 Z" fill="#111" stroke-width="0.8"/>
<path d="M23 32 C27 28 33 27 38 28 C42 28.5 47 27.5 52 28" fill="none" stroke="#fff" stroke-width="1.3"/>
<path d="M37 31.6 L51 31.9 M36 35 L50.5 35.6 M35.5 38.5 L49.5 39.2 M36 41.8 L47.5 42" fill="none" stroke="#fff" stroke-width="1.1"/>
<g fill="#fff" stroke="none"><ellipse cx="19.8" cy="42.6" rx="2" ry="1.4" transform="rotate(-35 19.8 42.6)"/><ellipse cx="23.4" cy="40.6" rx="2" ry="1.4" transform="rotate(-35 23.4 40.6)"/><ellipse cx="27" cy="39.3" rx="2" ry="1.4" transform="rotate(-35 27 39.3)"/><ellipse cx="23" cy="45.2" rx="2" ry="1.4" transform="rotate(-35 23 45.2)"/><ellipse cx="27" cy="43.7" rx="2" ry="1.4" transform="rotate(-35 27 43.7)"/><ellipse cx="30.6" cy="42.2" rx="2" ry="1.4" transform="rotate(-35 30.6 42.2)"/><ellipse cx="33.5" cy="44.8" rx="2" ry="1.3" transform="rotate(-35 33.5 44.8)"/></g>
<path d="M4 48.5 L14 48.3 L16 51 L17.5 48.5 L31 48.2 C34 49 35 51 34 53 L5 53.5 C3.5 53 3.5 50 4 48.5 Z" fill="#fff" stroke-width="1.1"/>
<path d="M37 53 C38 50 41 48.5 44 48 L51 47.8 L50 53 Z" fill="#111" stroke-width="0.8"/>
<rect x="54.8" y="48" width="3.2" height="5.2" fill="#111" stroke="none"/>
</g></svg><div class="t" style="left:1257px;top:496px;font-size:26.5px;line-height:30px;color:#222;letter-spacing:-0.8px;transform:scaleX(0.86);transform-origin:0 0;"><b><i>sh</i></b>ake</div><div class="t" style="left:1257px;top:518px;font-size:25.5px;line-height:30px;color:#222;letter-spacing:-0.3px;transform:scaleX(0.9);transform-origin:0 0;">hands</div><div class="a" style="left:1284px;top:551px;width:7px;height:7px;border:1px solid #333;border-radius:50%;"></div><div class="t" style="left:1284px;top:550.5px;width:9px;text-align:center;font-size:5px;line-height:9px;color:#333;">R</div><div class="t" style="top:480.39px;font-size:15.9px;line-height:19px;color:#111111;font-weight:700;left:1529.5px;">Rechnung</div><div class="t" style="top:560.99px;font-size:6.95px;line-height:8px;color:#111111;font-weight:700;left:1316.7px;">ShakeHands Software Ltd</div><div class="t" style="top:570.39px;font-size:6.95px;line-height:8px;color:#111111;left:1316.7px;">Sägemühle Kröschenbrunnen 18</div><div class="t" style="top:577.79px;font-size:6.95px;line-height:8px;color:#111111;left:1316.7px;">3555 Trubschachen, Schweiz</div><div class="t" style="top:586.59px;font-size:6.95px;line-height:8px;color:#111111;left:1316.7px;">Telefon 034 495 70 20</div><div class="t" style="top:593.89px;font-size:6.95px;line-height:8px;color:#111111;left:1316.7px;">ch@shakehands.com, www.shakehands.com</div><div class="t" style="top:606.59px;font-size:6.95px;line-height:8px;color:#111111;left:1318.5px;">Hotline 0900 57 52 38&nbsp; Fr. 3.25 p/min</div><div class="t" style="top:614.29px;font-size:6.95px;line-height:8px;color:#111111;left:1318.5px;">Preiswerter Support nach Mass</div><div class="t" style="top:563.19px;font-size:8.69px;line-height:10px;color:#111111;left:1529.5px;">Nadine Rungger Pilates GmbH</div><div class="t" style="top:573.39px;font-size:8.69px;line-height:10px;color:#111111;left:1529.5px;">Herr Martin Rothenberger</div><div class="t" style="top:583.49px;font-size:8.69px;line-height:10px;color:#111111;left:1529.5px;">Im Stoffel 27</div><div class="t" style="top:593.59px;font-size:8.69px;line-height:10px;color:#111111;left:1529.5px;">8887 Mels</div><div class="t" style="top:655.11px;font-size:6.9px;line-height:8px;color:#8a8a8a;left:1317.7px;">BelegNr</div><div class="t" style="top:655.11px;font-size:6.9px;line-height:8px;color:#111111;left:1398.6px;">2026-8306</div><div class="t" style="top:663.57px;font-size:6.9px;line-height:8px;color:#8a8a8a;left:1317.7px;">Datum</div><div class="t" style="top:663.57px;font-size:6.9px;line-height:8px;color:#111111;left:1398.6px;">12.01.2026</div><div class="t" style="top:672.03px;font-size:6.9px;line-height:8px;color:#8a8a8a;left:1317.7px;">Lieferdatum</div><div class="t" style="top:672.03px;font-size:6.9px;line-height:8px;color:#111111;left:1398.6px;">10.01.2026</div><div class="t" style="top:680.49px;font-size:6.9px;line-height:8px;color:#8a8a8a;left:1317.7px;">KundenNr</div><div class="t" style="top:680.49px;font-size:6.9px;line-height:8px;color:#111111;left:1398.6px;">179810</div><div class="t" style="top:688.95px;font-size:6.9px;line-height:8px;color:#8a8a8a;left:1317.7px;">Email</div><div class="t" style="top:688.95px;font-size:6.9px;line-height:8px;color:#111111;left:1398.6px;">martin@rungger.ch</div><div class="t" style="top:697.41px;font-size:6.9px;line-height:8px;color:#8a8a8a;left:1317.7px;">KundenMwSt</div><div class="t" style="top:697.41px;font-size:6.9px;line-height:8px;color:#111111;left:1398.6px;">CHE-100.719.557</div><div class="t" style="top:720.91px;font-size:6.9px;line-height:8px;color:#111111;left:1317.9px;">Wir verrechnen,</div><div class="t" style="top:738.49px;font-size:5.8px;line-height:7px;color:#8a8a8a;left:1319px;">BestNr</div><div class="t" style="top:738.49px;font-size:5.8px;line-height:7px;color:#8a8a8a;left:1370.7px;">Menge</div><div class="t" style="top:738.49px;font-size:5.8px;line-height:7px;color:#8a8a8a;left:1397px;">Bezeichnung</div><div class="t" style="top:738.49px;font-size:5.8px;line-height:7px;color:#8a8a8a;right:229.0999999999999px;text-align:right;">Einzelpreis</div><div class="t" style="top:738.49px;font-size:5.8px;line-height:7px;color:#8a8a8a;right:211.5px;text-align:right;">%</div><div class="t" style="top:738.49px;font-size:5.8px;line-height:7px;color:#8a8a8a;right:178.29999999999995px;text-align:right;">Betrag</div><div class="t" style="top:738.49px;font-size:5.8px;line-height:7px;color:#8a8a8a;right:157px;text-align:right;">MwSt</div><div class="a" style="left:1317px;top:748px;width:366px;height:0.8px;background:#444;"></div><div class="t" style="top:750.93px;font-size:7.7px;line-height:9px;color:#111111;left:1319px;">KTCT22U</div><div class="t" style="top:750.93px;font-size:7.7px;line-height:9px;color:#111111;left:1371.7px;">1 Stk</div><div class="t" style="top:750.90px;font-size:7.78px;line-height:9px;color:#111111;font-weight:700;left:1397px;">shakehands Kontor Complete 2025 Update</div><div class="t" style="top:750.93px;font-size:7.7px;line-height:9px;color:#111111;right:230px;text-align:right;">279.00</div><div class="t" style="top:750.93px;font-size:7.7px;line-height:9px;color:#111111;right:178.29999999999995px;text-align:right;">279.00</div><div class="t" style="top:750.93px;font-size:7.7px;line-height:9px;color:#111111;right:157px;text-align:right;">8.1</div><div class="t" style="top:761.92px;font-size:7.74px;line-height:9px;color:#111111;left:1397.4px;">shakehands Kontor Complete 2025, Ausführung</div><div class="t" style="top:770.91px;font-size:7.74px;line-height:9px;color:#111111;left:1397.4px;">Complete (Rechnungs- und Bestellwesen, Lager</div><div class="t" style="top:779.90px;font-size:7.74px;line-height:9px;color:#111111;left:1397.4px;">und Warenwirtschaft, sowie Finanzbuchhaltung)</div><div class="t" style="top:788.89px;font-size:7.74px;line-height:9px;color:#111111;left:1397.4px;">mit den Modulen Saldo, Balance und Basis,</div><div class="t" style="top:797.88px;font-size:7.74px;line-height:9px;color:#111111;left:1397.4px;">Update als Vollversion, Apple macOS (Intel und</div><div class="t" style="top:806.87px;font-size:7.74px;line-height:9px;color:#111111;left:1397.4px;">ARM) und Microsoft Windows als Download/Email</div><div class="t" style="top:815.86px;font-size:7.74px;line-height:9px;color:#111111;left:1397.4px;">oder ESD, inkl. 6 Monate Updateservice und 15</div><div class="t" style="top:824.85px;font-size:7.74px;line-height:9px;color:#111111;left:1397.4px;">Minuten Kulanzsupport in dieser Zeit, inkl. Lizenz</div><div class="t" style="top:833.84px;font-size:7.74px;line-height:9px;color:#111111;left:1397.4px;">per Email am 12.1.2026</div><div class="a" style="left:1317px;top:855.6px;width:366px;height:0.9px;background:#444;"></div><div class="t" style="top:862.46px;font-size:5.9px;line-height:7px;color:#8a8a8a;left:1317px;">MwStNr</div><div class="t" style="top:861.71px;font-size:6.6px;line-height:8px;color:#111111;left:1343.7px;">CHE-102.945.403 MWST</div><div class="t" style="top:862.46px;font-size:5.9px;line-height:7px;color:#8a8a8a;left:1424px;">MwSt</div><div class="t" style="top:861.71px;font-size:6.6px;line-height:8px;color:#111111;left:1446.5px;">8.1%</div><div class="t" style="top:862.46px;font-size:5.9px;line-height:7px;color:#8a8a8a;left:1468px;">Steuerbetrag</div><div class="t" style="top:861.71px;font-size:6.6px;line-height:8px;color:#111111;left:1517.4px;">20.91</div><div class="t" style="top:862.46px;font-size:5.9px;line-height:7px;color:#8a8a8a;left:1539px;">Steuerbasis</div><div class="t" style="top:861.71px;font-size:6.6px;line-height:8px;color:#111111;left:1584px;">258.09</div><div class="a" style="left:1317px;top:872.5px;width:366px;height:1px;background:#999;"></div><div class="t" style="top:876.68px;font-size:8.72px;line-height:10px;color:#111111;font-weight:700;left:1318px;">Rechnungsbetrag</div><div class="t" style="top:876.75px;font-size:8.5px;line-height:10px;color:#111111;font-weight:700;right:180.0999999999999px;text-align:right;">279.00</div><div class="t" style="top:876.75px;font-size:8.5px;line-height:10px;color:#111111;font-weight:700;right:156.20000000000005px;text-align:right;">CHF</div><div class="a" style="left:1317px;top:891.3px;width:366px;height:1px;background:#999;"></div><div class="t" style="top:903.69px;font-size:8.69px;line-height:10px;color:#111111;left:1317px;">Zahlbar rein netto in 10 Tagen bis am 22.01.2026.</div><div class="t" style="top:924.51px;font-size:8.64px;line-height:10px;color:#111111;left:1317px;">BIC VABECH22XXX</div><div class="t" style="top:934.61px;font-size:8.64px;line-height:10px;color:#111111;left:1317px;">IBAN CH33 0630 0505 6038 9368 8</div><div class="t" style="top:944.51px;font-size:8.64px;line-height:10px;color:#111111;left:1317px;">Valiant Bank AG, Langnau i.E</div><div class="a" style="left:800px;top:957px;width:940px;height:1.5px;background:#4a4a4a;"></div><div class="a" style="left:813px;top:967px;width:28px;height:28px;background:#565656;border-radius:5px;border:1px solid #7a7a7a;"></div><svg class="a" style="left:813px;top:967px;" width="28" height="28" viewBox="0 0 28 28"><path d="M14 8 V20 M8 14 H20" stroke="#f2f2f2" stroke-width="2" /></svg><div class="a" style="left:843.5px;top:967px;width:28px;height:28px;background:#565656;border-radius:5px;border:1px solid #7a7a7a;"></div><svg class="a" style="left:843.5px;top:967px;" width="28" height="28" viewBox="0 0 28 28"><path d="M8 14 H20" stroke="#f2f2f2" stroke-width="2" /></svg><div class="a" style="left:874px;top:967px;width:28px;height:28px;background:#565656;border-radius:5px;border:1px solid #7a7a7a;"></div><svg class="a" style="left:874px;top:967px;" width="28" height="28" viewBox="0 0 28 28"><path d="M16.7 8.95 A5.9 5.9 0 1 0 20.08 14.81" fill="none" stroke="#f2f2f2" stroke-width="1.9"/><path d="M16.2 11.6 L21.4 11.6 L21.4 6.6 Z" fill="#f2f2f2" stroke="#f2f2f2" stroke-width="0.5" stroke-linejoin="round"/></svg><div class="a" style="left:1699px;top:967px;width:28px;height:28px;background:#565656;border-radius:5px;border:1px solid #7a7a7a;"></div><svg class="a" style="left:1699px;top:967px;" width="28" height="28" viewBox="0 0 28 28"><rect x="7.5" y="8.5" width="13" height="11" rx="1.2" fill="none" stroke="#f2f2f2" stroke-width="1.2"/><path d="M11.5 8.5 V19.5" stroke="#f2f2f2" stroke-width="1.2"/><path d="M9 11 H10.2 M9 13 H10.2 M9 15 H10.2" stroke="#f2f2f2" stroke-width="0.9"/></svg><div class="a" style="left:1736px;top:487px;width:110px;height:32px;background:#2a2a2a;border-radius:6px;border:1px solid #5a5a5a;box-shadow:0 3px 8px rgba(0,0,0,0.5);"></div><div class="t" style="top:493.96px;font-size:16px;line-height:19px;color:#eaeaea;left:1752px;">Bildschirmfoto</div>
</div></body></html>
